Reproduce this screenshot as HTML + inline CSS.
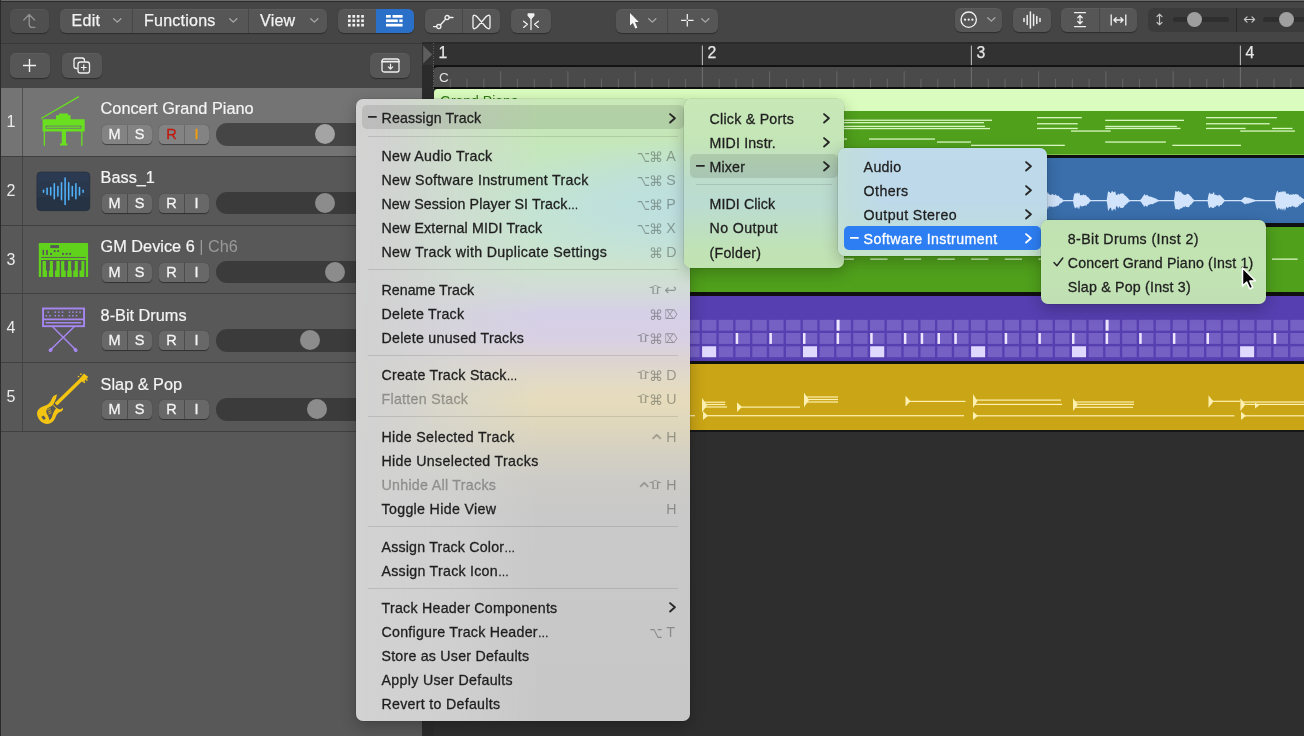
<!DOCTYPE html>
<html lang="en"><head><meta charset="utf-8"><title>Logic Pro - Reassign Track</title>
<style>
*{box-sizing:border-box;margin:0;padding:0}
html,body{width:1306px;height:738px;background:#fff;overflow:hidden}
body{font-family:"Liberation Sans",sans-serif;color:#fff;position:relative}
#app{position:absolute;left:0;top:0;width:1304px;height:736px;background:#2e2e2e;overflow:hidden;will-change:transform}
.abs{position:absolute}
#toolbar{position:absolute;left:0;top:0;width:1304px;height:43px;background:linear-gradient(to bottom,#2c2c2c 0,#2c2c2c .9px,#454545 1px) #454545;border-top:.9px solid #6a6a6a}
#row2{position:absolute;left:0;top:43px;width:422px;height:45px;background:#464646;border-top:1px solid #393939}
.btn{position:absolute;top:8px;height:24px;background:#565656;border-radius:6px;box-shadow:0 1px 1px rgba(0,0,0,.35), inset 0 .5px 0 rgba(255,255,255,.08)}
.btn.dim{background:#4f4f4f}
.btn .div{position:absolute;top:0;width:1px;height:24px;background:#474747}
.btn .lbl{position:absolute;top:.8px;letter-spacing:.25px;line-height:22px;font-size:16px;color:#f2f2f2;white-space:nowrap;-webkit-text-stroke:.25px #f2f2f2}
.btn svg{position:absolute;overflow:visible}
.tr{position:absolute;left:0;width:422px;height:68.75px;background:#585858;border-bottom:1px solid #404040}
.tr.sel{background:#747474}
.tr .num{position:absolute;left:0;top:0;width:23px;height:100%;border-right:1px solid #444;text-align:center;font-size:16px;color:#ececec;line-height:68.8px;padding-left:0px}
.tr.sel .num{border-right-color:#505050;}
.tr .name{position:absolute;left:100.6px;top:10.5px;font-size:16.3px;line-height:20px;color:#f4f4f4;white-space:nowrap;-webkit-text-stroke:.2px #f4f4f4}
.tr .name span{color:#9a9a9a;-webkit-text-stroke:0}
.ms{position:absolute;top:37px;height:19px;border-radius:4.5px;background:#686868;box-shadow:0 .5px .8px rgba(0,0,0,.45)}
.tr.sel .ms{background:#838383}
.ms b{position:absolute;top:0;width:25px;text-align:center;font-weight:normal;font-size:14.5px;line-height:19.4px;color:#f4f4f4;-webkit-text-stroke:.3px}
.ms i{position:absolute;left:24.5px;top:0;width:1px;height:100%;background:#4c4c4c}
.tr.sel .ms i{background:#6a6a6a}
.vol{position:absolute;left:216px;top:35px;width:200px;height:22.5px;border-radius:11.25px;background:#3b3b3b}
.tr.sel .vol{background:#454545}
.knob{position:absolute;top:1.2px;width:20px;height:20px;border-radius:10px;background:#8c8c8c}
.tr.sel .knob{background:#a4a4a4}
</style></head>
<body>
<div id="app">
<div id="toolbar"><div class="btn dim" style="left:10px;width:38.8px"><svg style="left:12px;top:4px" width="16" height="16" viewBox="0 0 16 16"><path d="M1.8 7 L7.2 1.6 L12.6 7 M7.2 2 V11.2 Q7.2 14.4 10.6 14.4 H12.8" fill="none" stroke="#919191" stroke-width="1.4" stroke-linecap="round" stroke-linejoin="round"/></svg></div><div class="btn" style="left:60px;width:266.5px"><span class="lbl" style="left:11.6px">Edit</span><svg style="left:52.7px;top:9.3px" width="8.6" height="5.2" viewBox="0 0 10 6"><path d="M0.8 0.8 L5 4.8 L9.2 0.8" fill="none" stroke="#a8a8a8" stroke-width="1.5" stroke-linecap="round" stroke-linejoin="round"/></svg><div class="div" style="left:72px"></div><span class="lbl" style="left:84px">Functions</span><svg style="left:168.7px;top:9.3px" width="8.6" height="5.2" viewBox="0 0 10 6"><path d="M0.8 0.8 L5 4.8 L9.2 0.8" fill="none" stroke="#a8a8a8" stroke-width="1.5" stroke-linecap="round" stroke-linejoin="round"/></svg><div class="div" style="left:187.5px"></div><span class="lbl" style="left:200px">View</span><svg style="left:249.7px;top:9.3px" width="8.6" height="5.2" viewBox="0 0 10 6"><path d="M0.8 0.8 L5 4.8 L9.2 0.8" fill="none" stroke="#a8a8a8" stroke-width="1.5" stroke-linecap="round" stroke-linejoin="round"/></svg></div><div class="btn" style="left:338px;width:76px;overflow:hidden"><svg style="left:10px;top:6.4px" width="16" height="12" viewBox="0 0 16 12" fill="#f0f0f0"><rect x="0.0" y="0.0" width="2.7" height="2.7"/><rect x="0.0" y="4.4" width="2.7" height="2.7"/><rect x="0.0" y="8.8" width="2.7" height="2.7"/><rect x="4.4" y="0.0" width="2.7" height="2.7"/><rect x="4.4" y="4.4" width="2.7" height="2.7"/><rect x="4.4" y="8.8" width="2.7" height="2.7"/><rect x="8.8" y="0.0" width="2.7" height="2.7"/><rect x="8.8" y="4.4" width="2.7" height="2.7"/><rect x="8.8" y="8.8" width="2.7" height="2.7"/><rect x="13.2" y="0.0" width="2.7" height="2.7"/><rect x="13.2" y="4.4" width="2.7" height="2.7"/><rect x="13.2" y="8.8" width="2.7" height="2.7"/></svg><div class="abs" style="left:38px;top:0;width:38px;height:24px;background:#2a6fc8"></div><svg style="left:48px;top:6.4px" width="17" height="12" viewBox="0 0 17 12" fill="#fff"><rect x="0" y="0" width="4.8" height="2.7"/><rect x="6.5" y="0" width="10.1" height="2.7"/><rect x="0" y="4.4" width="11.8" height="2.7"/><rect x="13.3" y="4.4" width="3.3" height="2.7"/><rect x="0" y="8.8" width="16.6" height="2.7"/></svg></div><div class="btn" style="left:425px;width:75px"><svg style="left:7.6px;top:3.5px" width="22" height="16" viewBox="0 0 22 16" fill="none" stroke="#f0f0f0" stroke-width="1.3" stroke-linecap="round"><path d="M0.5 13.6 H3.6"/><circle cx="5.8" cy="13.6" r="2.1"/><path d="M7.3 12 L12.6 6.2"/><circle cx="14.1" cy="4.6" r="2.1"/><path d="M16.3 4.5 H20"/></svg><div class="div" style="left:37px"></div><svg style="left:46.5px;top:6px" width="19" height="14" viewBox="0 0 19 14" fill="none" stroke="#f0f0f0" stroke-width="1.3" stroke-linejoin="round"><path d="M1 2.2 V11.8 M18 2.2 V11.8 M1 2.2 C1 -1 4 0 6.5 3.5 L12.5 10.5 C15 14 18 15 18 11.8 M1 11.8 C1 15 4 14 6.5 10.5 L12.5 3.5 C15 0 18 -1 18 2.2"/></svg></div><div class="btn" style="left:511px;width:39.5px"><svg style="left:10px;top:3.5px" width="20" height="17" viewBox="0 0 20 17" fill="none" stroke="#f0f0f0" stroke-width="1.3" stroke-linecap="round" stroke-linejoin="round"><path d="M7.2 1 H12.8 V2.6 L10.3 5.4 H9.7 L7.2 2.6 Z" fill="#f0f0f0"/><path d="M10 5 V16.5"/><path d="M2.6 8.2 L6.4 11.3 L2.6 14.4"/><path d="M17.4 8.2 L13.6 11.3 L17.4 14.4"/></svg></div><div class="btn" style="left:616px;width:102px"><svg style="left:13px;top:2.5px" width="11" height="18" viewBox="0 0 11 18"><path d="M1 1 V13.6 L3.9 10.9 L6.3 16.6 L8.4 15.7 L6 10.1 L9.8 9.9 Z" fill="#f4f4f4"/></svg><svg style="left:32.2px;top:9.3px" width="8.6" height="5.2" viewBox="0 0 10 6"><path d="M0.8 0.8 L5 4.8 L9.2 0.8" fill="none" stroke="#a8a8a8" stroke-width="1.5" stroke-linecap="round" stroke-linejoin="round"/></svg><div class="div" style="left:50.6px"></div><svg style="left:64.5px;top:5px" width="12.6" height="12.6" viewBox="0 0 15 15" fill="none" stroke="#f0f0f0" stroke-width="1.5"><path d="M7.5 0 V6.6 M7.5 8.4 V15 M0 7.5 H6.6 M8.4 7.5 H15"/></svg><svg style="left:85.2px;top:9.3px" width="8.6" height="5.2" viewBox="0 0 10 6"><path d="M0.8 0.8 L5 4.8 L9.2 0.8" fill="none" stroke="#a8a8a8" stroke-width="1.5" stroke-linecap="round" stroke-linejoin="round"/></svg></div><div class="btn" style="top:6.5px;left:955px;width:47px"><svg style="left:5.3px;top:3.4px" width="17.4" height="17.4" viewBox="0 0 17 17"><circle cx="8.5" cy="8.5" r="7.5" fill="none" stroke="#f0f0f0" stroke-width="1.3"/><circle cx="4.9" cy="8.5" r="1.1" fill="#f0f0f0"/><circle cx="8.5" cy="8.5" r="1.1" fill="#f0f0f0"/><circle cx="12.1" cy="8.5" r="1.1" fill="#f0f0f0"/></svg><svg style="left:32.2px;top:9.3px" width="8.6" height="5.2" viewBox="0 0 10 6"><path d="M0.8 0.8 L5 4.8 L9.2 0.8" fill="none" stroke="#a8a8a8" stroke-width="1.5" stroke-linecap="round" stroke-linejoin="round"/></svg></div><div class="btn" style="top:6.5px;left:1013px;width:37.5px"><svg style="left:10px;top:3px" width="18" height="18" viewBox="0 0 18 18" stroke="#f0f0f0" stroke-width="1.5" stroke-linecap="round"><path d="M1 7.5 V10.5 M4.2 4.5 V13.5 M7.4 1 V17 M10.6 3.5 V14.5 M13.8 5.5 V12.5 M17 7.5 V10.5"/></svg></div><div class="btn" style="top:6.5px;left:1061px;width:76px"><svg style="left:12px;top:3.5px" width="14" height="17" viewBox="0 0 14 17" fill="none" stroke="#f0f0f0" stroke-width="1.3" stroke-linecap="round" stroke-linejoin="round"><path d="M1.5 1.6 H12.5 M1.5 15.6 H12.5 M7 4.6 V12.6 M4.8 6.7 L7 4.5 L9.2 6.7 M4.8 10.5 L7 12.7 L9.2 10.5"/></svg><div class="div" style="left:38px"></div><svg style="left:48.5px;top:5px" width="17" height="14" viewBox="0 0 17 14" fill="none" stroke="#f0f0f0" stroke-width="1.3" stroke-linecap="round" stroke-linejoin="round"><path d="M1.2 2 V12 M15.8 2 V12 M4 7 H13 M6.2 4.8 L3.9 7 L6.2 9.2 M10.8 4.8 L13.1 7 L10.8 9.2"/></svg></div><div class="btn" style="top:6.5px;left:1147.5px;width:170px;background:#3b3b3b;box-shadow:none"><svg style="left:8.5px;top:5.5px" width="7" height="13" viewBox="0 0 9 17" fill="none" stroke="#c4c4c4" stroke-width="1.6" stroke-linecap="round" stroke-linejoin="round"><path d="M4.5 1.5 V15.5 M1.2 4.8 L4.5 1.5 L7.8 4.8 M1.2 12.2 L4.5 15.5 L7.8 12.2"/></svg><div class="abs" style="left:25.5px;top:9.5px;width:56px;height:5px;border-radius:2.5px;background:#2e2e2e"></div><div class="abs" style="left:39.9px;top:4.5px;width:15px;height:15px;border-radius:7.5px;background:#9f9f9f"></div><div class="div" style="left:88.5px;background:#2a2a2a"></div><svg style="left:95.8px;top:8.5px" width="13" height="7" viewBox="0 0 16 9" fill="none" stroke="#c4c4c4" stroke-width="1.6" stroke-linecap="round" stroke-linejoin="round"><path d="M1.5 4.5 H14.5 M4.8 1.2 L1.5 4.5 L4.8 7.8 M11.2 1.2 L14.5 4.5 L11.2 7.8"/></svg><div class="abs" style="left:115px;top:9.5px;width:56px;height:5px;border-radius:2.5px;background:#2e2e2e"></div><div class="abs" style="left:131.6px;top:4.5px;width:15px;height:15px;border-radius:7.5px;background:#9f9f9f"></div></div></div>
<div id="row2"><div class="btn" style="left:10px;top:9px;width:39.5px;height:24.5px"><svg style="left:13px;top:6px" width="13" height="13" viewBox="0 0 13 13" stroke="#f0f0f0" stroke-width="1.4"><path d="M6.5 0 V13 M0 6.5 H13"/></svg></div><div class="btn" style="left:62px;top:9px;width:39.5px;height:24.5px"><svg style="left:11px;top:4px" width="18" height="17" viewBox="0 0 18 17" fill="none" stroke="#f0f0f0" stroke-width="1.3" stroke-linejoin="round"><path d="M4.5 11.5 H3.3 Q1 11.5 1 9.2 V3.3 Q1 1 3.3 1 H9.2 Q11.5 1 11.5 3.3 V4.5"/><rect x="5" y="5" width="11.5" height="11" rx="2.3"/><path d="M10.75 7.6 V13.4 M7.85 10.5 H13.65" stroke-width="1.2"/></svg></div><div class="btn" style="left:370px;top:9px;width:40px;height:24.5px"><svg style="left:11px;top:5px" width="19" height="15" viewBox="0 0 19 15" fill="none" stroke="#f0f0f0" stroke-width="1.3" stroke-linecap="round" stroke-linejoin="round"><rect x="1" y="1" width="17" height="13" rx="2"/><path d="M1 3.6 H18" stroke-width="1.6"/><path d="M9.5 6 V11 M7.3 8.9 L9.5 11.1 L11.7 8.9" stroke-width="1.2"/></svg></div></div>
<div class="tr sel" style="top:88.0px"><div class="num">1</div><div class="name" style="top:9.8px">Concert Grand Piano</div><div class="ms" style="left:102px;width:50px"><b style="left:0">M</b><i></i><b style="left:25px">S</b></div><div class="ms" style="left:159px;width:50px"><b style="left:0;color:#c4170e">R</b><i></i><b style="left:25px;color:#f59e0b">I</b></div><div class="vol"><div class="knob" style="left:99px"></div></div></div>
<div class="tr" style="top:156.75px"><div class="num">2</div><div class="name">Bass_1</div><div class="ms" style="left:102px;width:50px"><b style="left:0">M</b><i></i><b style="left:25px">S</b></div><div class="ms" style="left:159px;width:50px"><b style="left:0">R</b><i></i><b style="left:25px">I</b></div><div class="vol"><div class="knob" style="left:99px"></div></div></div>
<div class="tr" style="top:225.5px"><div class="num">3</div><div class="name">GM Device 6<span> | Ch6</span></div><div class="ms" style="left:102px;width:50px"><b style="left:0">M</b><i></i><b style="left:25px">S</b></div><div class="ms" style="left:159px;width:50px"><b style="left:0">R</b><i></i><b style="left:25px">I</b></div><div class="vol"><div class="knob" style="left:109.39999999999998px"></div></div></div>
<div class="tr" style="top:294.25px"><div class="num">4</div><div class="name">8-Bit Drums</div><div class="ms" style="left:102px;width:50px"><b style="left:0">M</b><i></i><b style="left:25px">S</b></div><div class="ms" style="left:159px;width:50px"><b style="left:0">R</b><i></i><b style="left:25px">I</b></div><div class="vol"><div class="knob" style="left:84px"></div></div></div>
<div class="tr" style="top:363.0px"><div class="num">5</div><div class="name">Slap &amp; Pop</div><div class="ms" style="left:102px;width:50px"><b style="left:0">M</b><i></i><b style="left:25px">S</b></div><div class="ms" style="left:159px;width:50px"><b style="left:0">R</b><i></i><b style="left:25px">I</b></div><div class="vol"><div class="knob" style="left:91px"></div></div></div>
<svg class="abs" style="left:36px;top:93px" width="56" height="56" viewBox="36 93 56 56"><path d="M41.6 118.2 L78.4 96.9" stroke="#68e01f" stroke-width="1.3" stroke-linecap="round" fill="none"/><path d="M42.6 119.3 H56 V115.2 H59 V113.6 H68 V115.2 H70.6 V119.3 H84.7 V131.6 H82.5 V145.8 H81.2 V131.6 H66 V143.4 H67.4 V145.6 H60 V143.4 H61.8 V131.6 H45 V145.8 H43.7 V131.6 H42.6 Z" fill="#68e01f"/><rect x="45.6" y="125.6" width="35.8" height="3.1" fill="#747474"/><rect x="46.6" y="126.5" width="33.8" height="1.3" fill="#68e01f"/></svg>
<svg class="abs" style="left:36px;top:171px" width="56" height="42" viewBox="36 171 56 42"><rect x="36.9" y="172" width="52.9" height="38.7" rx="4" fill="#263345" stroke="#1f2a38" stroke-width=".6"/><rect x="37.2" y="172.3" width="52.3" height="19" rx="3.8" fill="#2e3e54" opacity=".75"/><rect x="37.2" y="181" width="52.3" height="16" fill="#2a384c" opacity=".8"/><g stroke="#50b2fb" stroke-width="1.55" stroke-linecap="round"><path d="M43.50 190.30 V192.30"/><path d="M47.10 188.30 V194.30"/><path d="M50.70 187.55 V195.05"/><path d="M54.30 183.80 V198.80"/><path d="M57.90 186.55 V196.05"/><path d="M61.50 182.80 V199.80"/><path d="M65.10 178.05 V204.55"/><path d="M68.70 182.80 V199.80"/><path d="M72.30 186.55 V196.05"/><path d="M75.90 183.80 V198.80"/><path d="M79.50 187.55 V195.05"/><path d="M83.10 190.30 V192.30"/></g></svg>
<svg class="abs" style="left:30px;top:236px" width="70" height="48" viewBox="0 0 1076 738"><rect x="135" y="108" width="758" height="524" rx="14" fill="#60d21c"/><rect x="312" y="140" width="133" height="46" fill="#585858"/><rect x="192" y="214" width="24" height="78" fill="#585858"/><rect x="248" y="214" width="26" height="78" fill="#585858"/><rect x="309" y="261" width="31" height="30" fill="#585858"/><rect x="365" y="217" width="30" height="28" fill="#585858"/><rect x="418" y="217" width="30" height="28" fill="#585858"/><rect x="493" y="260" width="30" height="30" fill="#585858"/><rect x="548" y="260" width="30" height="30" fill="#585858"/><rect x="601" y="260" width="31" height="30" fill="#585858"/><rect x="170" y="322" width="690" height="14" fill="#585858"/><rect x="170" y="370" width="690" height="262" fill="#585858"/><path d="M193 385 H245 V530 H262 V632 H193 V530 H193 Z" fill="#60d21c"/><path d="M305 385 H352 V530 H355 V632 H290 V530 H305 Z" fill="#60d21c"/><path d="M405 385 H457 V530 H457 V632 H385 V530 H405 Z" fill="#60d21c"/><path d="M478 385 H527 V530 H550 V632 H478 V530 H478 Z" fill="#60d21c"/><path d="M585 385 H632 V530 H642 V632 H572 V530 H585 Z" fill="#60d21c"/><path d="M688 385 H735 V530 H737 V632 H665 V530 H688 Z" fill="#60d21c"/><path d="M790 385 H835 V530 H835 V632 H760 V530 H790 Z" fill="#60d21c"/></svg>
<svg class="abs" style="left:30px;top:300px" width="70" height="56" viewBox="0 0 922 738"><rect x="172" y="112" width="540" height="233" fill="none" stroke="#a686f0" stroke-width="25"/><g fill="#a686f0"><rect x="230" y="150" width="20" height="20"/><rect x="323" y="150" width="20" height="20"/><rect x="370" y="150" width="20" height="20"/><rect x="418" y="150" width="20" height="20"/><rect x="510" y="150" width="20" height="20"/><rect x="555" y="150" width="20" height="20"/><rect x="603" y="150" width="20" height="20"/><rect x="650" y="150" width="20" height="20"/><rect x="205" y="197" width="20" height="20"/><rect x="252" y="197" width="20" height="20"/><rect x="323" y="197" width="20" height="20"/><rect x="370" y="197" width="20" height="20"/><rect x="418" y="197" width="20" height="20"/><rect x="510" y="197" width="20" height="20"/><rect x="555" y="197" width="20" height="20"/><rect x="603" y="197" width="20" height="20"/></g><path d="M172 255 H712" stroke="#a686f0" stroke-width="24"/><path d="M212 300 H668" stroke="#a686f0" stroke-width="18" stroke-linecap="round"/><path d="M298 352 L598 652 M582 352 L274 652" stroke="#a686f0" stroke-width="20" stroke-linecap="round"/><ellipse cx="272" cy="658" rx="30" ry="24" transform="rotate(-45 272 658)" fill="#a686f0"/><ellipse cx="600" cy="658" rx="30" ry="24" transform="rotate(45 600 658)" fill="#a686f0"/></svg>
<svg class="abs" style="left:24px;top:364px" width="80" height="70" viewBox="0 0 843 738"><path d="M350 322 C338 345 340 375 318 408 L312 428 C325 450 345 470 372 478 C392 480 400 470 408 458 C415 475 410 492 392 500 C362 510 348 525 338 548 C325 585 305 615 272 628 C235 640 195 625 168 595 C140 560 128 520 145 490 C160 462 195 450 232 436 C262 422 280 398 292 368 C300 342 325 325 350 322 Z" fill="#f3c411"/><path d="M326 412 L600 146 L622 168 L350 436 Z" fill="#f3c411"/><path d="M298 446 L322 412 L352 382" fill="none" stroke="#585858" stroke-width="7" stroke-linecap="round"/><path d="M326 412 L600 146 L622 168 L350 436 Z" fill="#f3c411"/><path d="M585 158 L632 100 L678 138 L650 165 L622 196 Z" fill="#f3c411"/><circle cx="600" cy="106" r="9" fill="#f3c411"/><circle cx="575" cy="132" r="9" fill="#f3c411"/><circle cx="662" cy="168" r="9" fill="#f3c411"/><circle cx="636" cy="192" r="9" fill="#f3c411"/><path d="M246 470 C268 455 290 448 305 436 L338 470 C318 490 305 520 298 548 C292 570 282 585 268 590 C262 560 250 540 238 520 C232 500 236 482 246 470 Z" fill="#585858"/><path d="M182 560 L205 542 L230 572 L208 590 Z" fill="#585858"/><path d="M250 482 L275 470 M258 505 L283 493 M263 525 L285 515" stroke="#f3c411" stroke-width="9" stroke-linecap="round"/></svg>
<div class="abs" style="left:0;top:431.75px;width:422px;height:400px;background:#585858"></div>
<div class="abs" style="left:0;top:0;width:1px;height:736px;background:#2b2b2b"></div>
<div class="abs" style="left:422px;top:43px;width:882px;height:693px;background:#2e2e2e"></div>
<div class="abs" style="left:422px;top:43px;width:12px;height:693px;background:#2b2b2b"></div>
<div class="abs" style="left:422px;top:42px;width:882px;height:1.5px;background:#2a2a2a"></div>
<div class="abs" style="left:422px;top:43.5px;width:882px;height:21.5px;background:#323232"></div>
<div class="abs" style="left:434px;top:65px;width:870px;height:3px;background:#131313"></div>
<div class="abs" style="left:434px;top:67px;width:870px;height:20.3px;background:#4a4a4a;border-top-left-radius:4px"></div>
<div class="abs" style="left:434px;top:87.2px;width:870px;height:2px;background:#0e0e0e"></div>
<svg class="abs" style="left:422px;top:43px" width="12" height="24" viewBox="0 0 12 24"><path d="M1.2 2.5 L10.2 11.5 L1.2 20.5 Z" fill="#5e5e5e"/></svg>
<div class="abs" style="left:433.3px;top:43px;width:1px;height:46px;background:repeating-linear-gradient(to bottom,#6a6a6a 0 1px,transparent 1px 2.5px);opacity:.8"></div>
<svg class="abs" style="left:0;top:43px" width="1304" height="46" viewBox="0 0 1304 46"><rect x="701.85" y="2.6" width="1.1" height="19.6" fill="#b8b8b8"/><rect x="701.85" y="24" width="1.1" height="20.2" fill="#6e6e6e"/><rect x="970.85" y="2.6" width="1.1" height="19.6" fill="#b8b8b8"/><rect x="970.85" y="24" width="1.1" height="20.2" fill="#6e6e6e"/><rect x="1239.85" y="2.6" width="1.1" height="19.6" fill="#b8b8b8"/><rect x="1239.85" y="24" width="1.1" height="20.2" fill="#6e6e6e"/><rect x="449.71" y="35.8" width="1" height="8.5" fill="#666"/><rect x="466.52" y="35.8" width="1" height="8.5" fill="#666"/><rect x="483.34" y="35.8" width="1" height="8.5" fill="#666"/><rect x="500.15" y="28.3" width="1" height="16" fill="#686868"/><rect x="516.96" y="35.8" width="1" height="8.5" fill="#666"/><rect x="533.77" y="35.8" width="1" height="8.5" fill="#666"/><rect x="550.59" y="35.8" width="1" height="8.5" fill="#666"/><rect x="567.40" y="28.3" width="1" height="16" fill="#686868"/><rect x="584.21" y="35.8" width="1" height="8.5" fill="#666"/><rect x="601.02" y="35.8" width="1" height="8.5" fill="#666"/><rect x="617.84" y="35.8" width="1" height="8.5" fill="#666"/><rect x="634.65" y="28.3" width="1" height="16" fill="#686868"/><rect x="651.46" y="35.8" width="1" height="8.5" fill="#666"/><rect x="668.27" y="35.8" width="1" height="8.5" fill="#666"/><rect x="685.09" y="35.8" width="1" height="8.5" fill="#666"/><rect x="718.71" y="35.8" width="1" height="8.5" fill="#666"/><rect x="735.52" y="35.8" width="1" height="8.5" fill="#666"/><rect x="752.34" y="35.8" width="1" height="8.5" fill="#666"/><rect x="769.15" y="28.3" width="1" height="16" fill="#686868"/><rect x="785.96" y="35.8" width="1" height="8.5" fill="#666"/><rect x="802.77" y="35.8" width="1" height="8.5" fill="#666"/><rect x="819.59" y="35.8" width="1" height="8.5" fill="#666"/><rect x="836.40" y="28.3" width="1" height="16" fill="#686868"/><rect x="853.21" y="35.8" width="1" height="8.5" fill="#666"/><rect x="870.02" y="35.8" width="1" height="8.5" fill="#666"/><rect x="886.84" y="35.8" width="1" height="8.5" fill="#666"/><rect x="903.65" y="28.3" width="1" height="16" fill="#686868"/><rect x="920.46" y="35.8" width="1" height="8.5" fill="#666"/><rect x="937.27" y="35.8" width="1" height="8.5" fill="#666"/><rect x="954.09" y="35.8" width="1" height="8.5" fill="#666"/><rect x="987.71" y="35.8" width="1" height="8.5" fill="#666"/><rect x="1004.52" y="35.8" width="1" height="8.5" fill="#666"/><rect x="1021.34" y="35.8" width="1" height="8.5" fill="#666"/><rect x="1038.15" y="28.3" width="1" height="16" fill="#686868"/><rect x="1054.96" y="35.8" width="1" height="8.5" fill="#666"/><rect x="1071.78" y="35.8" width="1" height="8.5" fill="#666"/><rect x="1088.59" y="35.8" width="1" height="8.5" fill="#666"/><rect x="1105.40" y="28.3" width="1" height="16" fill="#686868"/><rect x="1122.21" y="35.8" width="1" height="8.5" fill="#666"/><rect x="1139.03" y="35.8" width="1" height="8.5" fill="#666"/><rect x="1155.84" y="35.8" width="1" height="8.5" fill="#666"/><rect x="1172.65" y="28.3" width="1" height="16" fill="#686868"/><rect x="1189.46" y="35.8" width="1" height="8.5" fill="#666"/><rect x="1206.28" y="35.8" width="1" height="8.5" fill="#666"/><rect x="1223.09" y="35.8" width="1" height="8.5" fill="#666"/><rect x="1256.71" y="35.8" width="1" height="8.5" fill="#666"/><rect x="1273.53" y="35.8" width="1" height="8.5" fill="#666"/><rect x="1290.34" y="35.8" width="1" height="8.5" fill="#666"/></svg>
<div class="abs" style="left:438.4px;top:44px;font-size:15.8px;line-height:18px;color:#e6e6e6;-webkit-text-stroke:.25px #e6e6e6">1</div>
<div class="abs" style="left:707.4px;top:44px;font-size:15.8px;line-height:18px;color:#e6e6e6;-webkit-text-stroke:.25px #e6e6e6">2</div>
<div class="abs" style="left:976.4px;top:44px;font-size:15.8px;line-height:18px;color:#e6e6e6;-webkit-text-stroke:.25px #e6e6e6">3</div>
<div class="abs" style="left:1245.4px;top:44px;font-size:15.8px;line-height:18px;color:#e6e6e6;-webkit-text-stroke:.25px #e6e6e6">4</div>
<div class="abs" style="left:439px;top:68.5px;font-size:13.5px;line-height:18px;color:#e4e4e4">C</div>
<div class="abs" style="left:434px;top:89px;width:870px;height:66px;background:#50a01c;border-top-left-radius:4px;overflow:hidden"><div class="abs" style="left:0;top:0;width:100%;height:22px;background:#dafcbe"></div><div class="abs" style="left:6px;top:2.6px;font-size:14px;line-height:18px;color:#2f7d12;white-space:nowrap">Grand Piano</div></div>
<svg class="abs" style="left:0;top:0" width="1304" height="440" viewBox="0 0 1304 440"><rect x="844" y="119.6" width="148" height="1.3" fill="#d8f7c0"/><rect x="844" y="122.0" width="140" height="1.3" fill="#d8f7c0"/><rect x="844" y="125.7" width="141" height="1.3" fill="#d8f7c0"/><rect x="844" y="127.9" width="146" height="1.3" fill="#d8f7c0"/><rect x="844" y="138.4" width="3" height="1.3" fill="#d8f7c0"/><rect x="869" y="138.4" width="66" height="1.3" fill="#d8f7c0"/><rect x="937" y="141.4" width="34" height="1.3" fill="#d8f7c0"/><rect x="971" y="144.7" width="93.79999999999995" height="1.3" fill="#d8f7c0"/><rect x="1037" y="117.0" width="44.799999999999955" height="1.3" fill="#d8f7c0"/><rect x="1037" y="123.1" width="40.700000000000045" height="1.3" fill="#d8f7c0"/><rect x="1037" y="127.8" width="40.700000000000045" height="1.3" fill="#d8f7c0"/><rect x="1071" y="130.4" width="39.700000000000045" height="1.3" fill="#d8f7c0"/><rect x="1105.2" y="119.7" width="78.79999999999995" height="1.3" fill="#d8f7c0"/><rect x="1105.2" y="125.8" width="71.70000000000005" height="1.3" fill="#d8f7c0"/><rect x="1105.2" y="127.8" width="75.29999999999995" height="1.3" fill="#d8f7c0"/><rect x="1105.2" y="141.4" width="60.700000000000045" height="1.3" fill="#d8f7c0"/><rect x="1172.4" y="144.7" width="68.59999999999991" height="1.3" fill="#d8f7c0"/><rect x="1206" y="117.0" width="70.90000000000009" height="1.3" fill="#d8f7c0"/><rect x="1206" y="123.1" width="63.700000000000045" height="1.3" fill="#d8f7c0"/><rect x="1206" y="127.8" width="39.700000000000045" height="1.3" fill="#d8f7c0"/><rect x="1272.2" y="127.8" width="20.299999999999955" height="1.3" fill="#d8f7c0"/><rect x="1240.2" y="130.4" width="54.799999999999955" height="1.3" fill="#d8f7c0"/></svg>
<div class="abs" style="left:434px;top:153.5px;width:870px;height:1.5px;background:#7fc04a"></div>
<div class="abs" style="left:434px;top:155px;width:870px;height:3.1px;background:#101010"></div>
<div class="abs" style="left:434px;top:158.2px;width:870px;height:65.3px;background:#3a6fac"></div>
<svg class="abs" style="left:0;top:0" width="1304" height="440" viewBox="0 0 1304 440"><g fill="#d2e4fb"><rect x="434" y="200" width="870" height="1.25"/><path d="M434.2 200.0 L434.9 196.4 L435.6 193.4 L436.3 192.6 L437.0 192.3 L437.7 192.5 L438.5 193.3 L439.2 191.5 L439.9 193.0 L440.6 191.2 L441.3 192.6 L442.0 193.5 L442.7 194.9 L443.4 195.2 L444.1 193.9 L444.8 194.3 L445.6 194.7 L446.3 195.3 L447.0 195.0 L447.7 194.6 L448.4 194.3 L449.1 194.8 L449.8 194.1 L450.5 194.7 L451.2 194.9 L451.9 196.3 L452.7 197.1 L453.4 197.0 L454.1 197.9 L454.8 198.5 L455.5 199.2 L456.2 200.0 L456.2 201.2 L455.5 202.1 L454.8 202.8 L454.1 203.0 L453.4 203.8 L452.7 204.0 L451.9 205.4 L451.2 206.7 L450.5 206.5 L449.8 206.6 L449.1 206.8 L448.4 206.8 L447.7 206.3 L447.0 206.5 L446.3 205.3 L445.6 206.6 L444.8 207.1 L444.1 206.7 L443.4 205.7 L442.7 205.8 L442.0 208.5 L441.3 209.7 L440.6 210.2 L439.9 208.5 L439.2 208.7 L438.5 207.7 L437.7 207.7 L437.0 207.8 L436.3 207.6 L435.6 207.9 L434.9 205.0 L434.2 201.2 Z"/><path d="M467.8 200.0 L468.5 195.3 L469.3 193.3 L470.0 192.2 L470.7 192.8 L471.4 192.7 L472.1 192.1 L472.9 193.7 L473.6 192.8 L474.3 193.3 L475.0 195.7 L475.7 194.7 L476.5 195.5 L477.2 194.5 L477.9 195.2 L478.6 194.5 L479.3 194.5 L480.1 195.2 L480.8 194.5 L481.5 196.2 L482.2 196.7 L482.9 197.1 L483.7 197.9 L484.4 198.5 L485.1 199.2 L485.8 200.0 L485.8 201.2 L485.1 202.1 L484.4 202.7 L483.7 203.0 L482.9 204.2 L482.2 204.2 L481.5 204.6 L480.8 207.5 L480.1 205.8 L479.3 206.3 L478.6 207.3 L477.9 206.1 L477.2 206.0 L476.5 205.5 L475.7 205.9 L475.0 204.9 L474.3 207.3 L473.6 207.4 L472.9 207.3 L472.1 209.9 L471.4 208.8 L470.7 207.4 L470.0 209.0 L469.3 208.6 L468.5 206.0 L467.8 201.2 Z"/><path d="M501.4 200.0 L502.2 195.7 L502.9 193.4 L503.6 191.6 L504.3 191.6 L505.0 192.6 L505.7 192.0 L506.4 193.4 L507.1 193.2 L507.8 193.4 L508.5 193.2 L509.3 192.7 L510.0 193.8 L510.7 195.1 L511.4 194.8 L512.1 195.2 L512.8 193.6 L513.5 194.5 L514.2 195.2 L514.9 194.9 L515.6 195.1 L516.4 193.7 L517.1 195.1 L517.8 195.7 L518.5 194.7 L519.2 195.8 L519.9 196.8 L520.6 197.0 L521.3 197.7 L522.0 198.7 L522.7 199.1 L523.5 200.0 L523.5 201.2 L522.7 202.2 L522.0 202.6 L521.3 203.4 L520.6 204.2 L519.9 204.1 L519.2 205.1 L518.5 207.0 L517.8 205.6 L517.1 206.1 L516.4 207.6 L515.6 205.4 L514.9 206.8 L514.2 205.8 L513.5 206.0 L512.8 207.6 L512.1 206.6 L511.4 206.2 L510.7 205.7 L510.0 207.6 L509.3 207.5 L508.5 207.2 L507.8 206.8 L507.1 207.7 L506.4 207.2 L505.7 208.2 L505.0 207.7 L504.3 209.4 L503.6 210.5 L502.9 208.6 L502.2 205.7 L501.4 201.2 Z"/><path d="M535.1 200.0 L535.8 195.1 L536.5 193.1 L537.2 194.2 L538.0 193.7 L538.7 192.7 L539.4 193.3 L540.1 192.1 L540.8 193.5 L541.6 193.8 L542.3 195.6 L543.0 194.5 L543.7 195.1 L544.4 194.6 L545.2 194.8 L545.9 194.6 L546.6 195.1 L547.3 194.6 L548.0 194.6 L548.8 195.9 L549.5 195.9 L550.2 197.4 L550.9 198.0 L551.6 198.3 L552.4 199.1 L553.1 200.0 L553.1 201.2 L552.4 202.2 L551.6 202.7 L550.9 203.4 L550.2 203.5 L549.5 205.6 L548.8 205.2 L548.0 207.4 L547.3 206.3 L546.6 205.6 L545.9 207.0 L545.2 207.0 L544.4 205.9 L543.7 206.3 L543.0 207.3 L542.3 205.8 L541.6 206.8 L540.8 207.2 L540.1 210.2 L539.4 208.8 L538.7 209.5 L538.0 207.1 L537.2 206.1 L536.5 207.8 L535.8 205.7 L535.1 201.2 Z"/><path d="M568.7 200.0 L569.4 195.8 L570.1 193.5 L570.8 191.9 L571.5 191.2 L572.2 191.4 L573.0 193.0 L573.7 192.8 L574.4 192.1 L575.1 192.5 L575.8 191.3 L576.5 192.4 L577.2 193.7 L577.9 193.7 L578.6 194.4 L579.3 195.4 L580.1 195.1 L580.8 193.9 L581.5 194.5 L582.2 194.4 L582.9 194.4 L583.6 194.0 L584.3 194.4 L585.0 195.2 L585.7 195.4 L586.4 195.7 L587.2 196.7 L587.9 197.3 L588.6 197.8 L589.3 198.5 L590.0 199.1 L590.7 200.0 L590.7 201.2 L590.0 202.1 L589.3 202.6 L588.6 203.4 L587.9 203.9 L587.2 204.6 L586.4 206.0 L585.7 205.8 L585.0 206.3 L584.3 206.4 L583.6 206.5 L582.9 206.8 L582.2 206.5 L581.5 207.0 L580.8 206.7 L580.1 205.4 L579.3 205.8 L578.6 206.8 L577.9 207.5 L577.2 207.3 L576.5 209.0 L575.8 209.5 L575.1 207.9 L574.4 208.5 L573.7 207.8 L573.0 207.6 L572.2 210.7 L571.5 209.8 L570.8 209.3 L570.1 208.6 L569.4 204.9 L568.7 201.2 Z"/><path d="M602.3 200.0 L603.0 195.8 L603.8 192.2 L604.5 194.0 L605.2 193.3 L605.9 193.8 L606.6 192.8 L607.4 192.3 L608.1 192.7 L608.8 194.0 L609.5 194.3 L610.2 194.4 L611.0 195.1 L611.7 194.6 L612.4 195.2 L613.1 195.4 L613.8 195.4 L614.6 195.9 L615.3 195.2 L616.0 196.0 L616.7 196.4 L617.4 196.6 L618.2 197.4 L618.9 198.6 L619.6 199.1 L620.3 200.0 L620.3 201.2 L619.6 202.0 L618.9 202.4 L618.2 203.5 L617.4 204.9 L616.7 204.3 L616.0 205.4 L615.3 205.3 L614.6 205.4 L613.8 206.1 L613.1 205.4 L612.4 206.0 L611.7 206.1 L611.0 206.8 L610.2 206.7 L609.5 206.4 L608.8 207.9 L608.1 208.9 L607.4 208.1 L606.6 209.0 L605.9 206.6 L605.2 207.0 L604.5 206.5 L603.8 209.8 L603.0 205.5 L602.3 201.2 Z"/><path d="M635.9 200.0 L636.7 195.3 L637.4 192.9 L638.1 191.3 L638.8 191.8 L639.5 193.4 L640.2 192.5 L640.9 191.2 L641.6 191.5 L642.3 191.4 L643.0 191.4 L643.8 192.7 L644.5 193.7 L645.2 195.1 L645.9 195.0 L646.6 195.1 L647.3 195.0 L648.0 194.8 L648.7 194.9 L649.4 195.1 L650.1 195.4 L650.9 195.4 L651.6 194.4 L652.3 194.9 L653.0 196.0 L653.7 196.1 L654.4 196.3 L655.1 197.3 L655.8 197.6 L656.5 198.4 L657.2 199.2 L657.9 200.0 L657.9 201.2 L657.2 202.0 L656.5 202.9 L655.8 203.5 L655.1 204.1 L654.4 204.8 L653.7 205.1 L653.0 205.5 L652.3 207.0 L651.6 206.3 L650.9 206.2 L650.1 205.5 L649.4 205.9 L648.7 206.3 L648.0 206.8 L647.3 205.9 L646.6 205.4 L645.9 205.7 L645.2 206.1 L644.5 207.1 L643.8 208.6 L643.0 209.7 L642.3 208.7 L641.6 208.6 L640.9 210.4 L640.2 207.7 L639.5 208.1 L638.8 208.4 L638.1 210.1 L637.4 207.5 L636.7 206.3 L635.9 201.2 Z"/><path d="M669.6 200.0 L670.3 196.0 L671.0 192.6 L671.7 193.9 L672.5 192.4 L673.2 192.8 L673.9 193.7 L674.6 193.3 L675.3 193.3 L676.1 192.1 L676.8 195.0 L677.5 194.3 L678.2 195.3 L678.9 195.3 L679.7 195.1 L680.4 195.1 L681.1 195.5 L681.8 195.3 L682.5 195.9 L683.3 196.1 L684.0 196.4 L684.7 196.9 L685.4 197.5 L686.1 198.5 L686.9 199.3 L687.6 200.0 L687.6 201.2 L686.9 202.0 L686.1 202.9 L685.4 203.7 L684.7 204.5 L684.0 205.1 L683.3 205.2 L682.5 205.1 L681.8 205.3 L681.1 205.2 L680.4 205.4 L679.7 205.7 L678.9 205.9 L678.2 205.2 L677.5 206.5 L676.8 205.8 L676.1 210.2 L675.3 207.4 L674.6 207.2 L673.9 207.1 L673.2 207.9 L672.5 209.6 L671.7 206.5 L671.0 208.0 L670.3 204.7 L669.6 201.2 Z"/><path d="M703.2 200.0 L703.9 195.4 L704.6 192.0 L705.3 191.5 L706.0 192.3 L706.7 191.5 L707.5 191.5 L708.2 191.3 L708.9 191.8 L709.6 193.5 L710.3 192.7 L711.0 191.5 L711.7 194.2 L712.4 194.1 L713.1 195.4 L713.8 194.0 L714.6 194.4 L715.3 195.3 L716.0 194.9 L716.7 194.9 L717.4 195.0 L718.1 193.6 L718.8 194.7 L719.5 194.6 L720.2 195.3 L720.9 196.6 L721.7 196.9 L722.4 197.5 L723.1 198.2 L723.8 198.7 L724.5 199.2 L725.2 200.0 L725.2 201.2 L724.5 202.0 L723.8 202.6 L723.1 202.7 L722.4 203.8 L721.7 204.5 L720.9 204.2 L720.2 206.1 L719.5 207.1 L718.8 206.5 L718.1 207.6 L717.4 206.6 L716.7 206.7 L716.0 205.6 L715.3 206.3 L714.6 207.1 L713.8 207.2 L713.1 206.2 L712.4 207.0 L711.7 207.2 L711.0 209.9 L710.3 207.7 L709.6 207.0 L708.9 208.7 L708.2 210.4 L707.5 209.9 L706.7 210.5 L706.0 209.0 L705.3 208.8 L704.6 209.8 L703.9 206.3 L703.2 201.2 Z"/><path d="M736.8 200.0 L737.5 195.5 L738.3 194.0 L739.0 193.8 L739.7 192.2 L740.4 193.3 L741.1 192.1 L741.9 193.7 L742.6 192.2 L743.3 193.0 L744.0 195.1 L744.7 195.7 L745.5 195.1 L746.2 194.8 L746.9 194.5 L747.6 195.9 L748.3 195.1 L749.1 195.4 L749.8 195.3 L750.5 195.3 L751.2 196.1 L751.9 197.4 L752.7 197.6 L753.4 198.6 L754.1 199.2 L754.8 200.0 L754.8 201.2 L754.1 202.1 L753.4 202.6 L752.7 203.9 L751.9 204.1 L751.2 205.5 L750.5 205.2 L749.8 205.6 L749.1 205.3 L748.3 206.0 L747.6 204.7 L746.9 206.7 L746.2 206.0 L745.5 206.7 L744.7 205.9 L744.0 206.8 L743.3 207.5 L742.6 208.3 L741.9 207.0 L741.1 209.0 L740.4 208.6 L739.7 207.9 L739.0 208.2 L738.3 207.9 L737.5 205.6 L736.8 201.2 Z"/><path d="M770.4 200.0 L771.2 196.0 L771.9 193.4 L772.6 191.5 L773.3 191.2 L774.0 192.9 L774.7 193.1 L775.4 191.2 L776.1 191.5 L776.8 191.3 L777.5 192.2 L778.3 193.4 L779.0 194.6 L779.7 194.2 L780.4 195.3 L781.1 195.2 L781.8 194.8 L782.5 194.0 L783.2 194.9 L783.9 194.8 L784.6 194.7 L785.4 195.1 L786.1 193.7 L786.8 195.3 L787.5 194.7 L788.2 196.5 L788.9 197.1 L789.6 197.6 L790.3 198.1 L791.0 198.4 L791.7 199.3 L792.4 200.0 L792.4 201.2 L791.7 201.9 L791.0 202.9 L790.3 203.2 L789.6 203.4 L788.9 204.0 L788.2 204.4 L787.5 206.4 L786.8 206.4 L786.1 207.5 L785.4 205.7 L784.6 206.0 L783.9 206.5 L783.2 206.5 L782.5 208.0 L781.8 206.1 L781.1 206.0 L780.4 206.5 L779.7 206.6 L779.0 207.0 L778.3 208.2 L777.5 209.5 L776.8 211.1 L776.1 210.0 L775.4 211.1 L774.7 207.8 L774.0 208.3 L773.3 209.3 L772.6 209.2 L771.9 207.0 L771.2 204.9 L770.4 201.2 Z"/><path d="M804.1 200.0 L804.8 195.7 L805.5 193.7 L806.2 194.0 L807.0 192.9 L807.7 193.8 L808.4 193.7 L809.1 193.3 L809.8 192.4 L810.6 194.2 L811.3 194.8 L812.0 195.1 L812.7 195.9 L813.4 194.4 L814.2 194.5 L814.9 195.5 L815.6 195.7 L816.3 194.8 L817.0 194.7 L817.8 195.4 L818.5 196.3 L819.2 196.8 L819.9 197.4 L820.6 198.5 L821.4 199.3 L822.1 200.0 L822.1 201.2 L821.4 202.0 L820.6 202.5 L819.9 203.9 L819.2 204.2 L818.5 204.4 L817.8 205.8 L817.0 206.7 L816.3 207.1 L815.6 205.6 L814.9 205.2 L814.2 207.5 L813.4 207.3 L812.7 205.2 L812.0 206.2 L811.3 207.1 L810.6 206.1 L809.8 209.7 L809.1 208.8 L808.4 207.3 L807.7 207.0 L807.0 209.1 L806.2 207.2 L805.5 208.4 L804.8 204.9 L804.1 201.2 Z"/><path d="M837.7 200.0 L838.4 196.5 L839.1 192.1 L839.8 193.0 L840.5 193.5 L841.2 192.4 L842.0 191.9 L842.7 192.4 L843.4 192.9 L844.1 191.8 L844.8 193.5 L845.5 191.9 L846.2 194.9 L846.9 193.7 L847.6 195.3 L848.3 194.6 L849.1 195.0 L849.8 194.0 L850.5 195.0 L851.2 194.8 L851.9 195.0 L852.6 194.0 L853.3 193.7 L854.0 195.4 L854.7 195.6 L855.4 195.5 L856.2 196.8 L856.9 196.8 L857.6 198.2 L858.3 198.6 L859.0 199.2 L859.7 200.0 L859.7 201.2 L859.0 202.1 L858.3 202.8 L857.6 202.7 L856.9 204.0 L856.2 204.1 L855.4 205.2 L854.7 205.8 L854.0 205.4 L853.3 207.5 L852.6 206.8 L851.9 205.8 L851.2 206.9 L850.5 206.9 L849.8 207.2 L849.1 206.6 L848.3 206.9 L847.6 205.6 L846.9 207.0 L846.2 206.5 L845.5 209.1 L844.8 207.7 L844.1 208.9 L843.4 209.2 L842.7 208.2 L842.0 210.2 L841.2 209.8 L840.5 207.3 L839.8 208.4 L839.1 208.8 L838.4 204.8 L837.7 201.2 Z"/><path d="M871.3 200.0 L872.0 195.7 L872.8 192.2 L873.5 194.2 L874.2 193.4 L874.9 193.5 L875.6 194.3 L876.4 193.5 L877.1 194.0 L877.8 193.8 L878.5 194.6 L879.2 195.2 L880.0 195.1 L880.7 194.4 L881.4 195.3 L882.1 195.9 L882.8 194.6 L883.6 195.8 L884.3 195.8 L885.0 196.1 L885.7 195.9 L886.4 197.3 L887.2 197.7 L887.9 198.3 L888.6 199.3 L889.3 200.0 L889.3 201.2 L888.6 201.8 L887.9 202.8 L887.2 203.4 L886.4 204.3 L885.7 205.1 L885.0 205.4 L884.3 205.9 L883.6 204.8 L882.8 207.0 L882.1 205.2 L881.4 206.4 L880.7 206.3 L880.0 205.9 L879.2 205.3 L878.5 207.2 L877.8 207.1 L877.1 208.0 L876.4 208.6 L875.6 206.5 L874.9 207.0 L874.2 207.5 L873.5 207.3 L872.8 209.6 L872.0 205.1 L871.3 201.2 Z"/><path d="M904.9 200.0 L905.7 195.7 L906.4 193.5 L907.1 192.4 L907.8 191.2 L908.5 192.9 L909.2 192.3 L909.9 193.1 L910.6 191.7 L911.3 191.6 L912.0 192.7 L912.8 192.7 L913.5 195.2 L914.2 194.0 L914.9 195.3 L915.6 194.4 L916.3 193.6 L917.0 193.6 L917.7 195.2 L918.4 194.5 L919.1 194.6 L919.9 194.6 L920.6 194.2 L921.3 194.3 L922.0 196.0 L922.7 196.3 L923.4 196.8 L924.1 197.5 L924.8 198.1 L925.5 198.4 L926.2 199.3 L926.9 200.0 L926.9 201.2 L926.2 201.9 L925.5 202.9 L924.8 202.9 L924.1 203.5 L923.4 204.6 L922.7 205.0 L922.0 205.6 L921.3 207.2 L920.6 207.5 L919.9 206.8 L919.1 206.2 L918.4 207.1 L917.7 205.4 L917.0 207.2 L916.3 208.3 L915.6 206.5 L914.9 205.3 L914.2 206.7 L913.5 205.5 L912.8 209.2 L912.0 208.1 L911.3 209.8 L910.6 210.3 L909.9 208.7 L909.2 209.9 L908.5 208.1 L907.8 209.7 L907.1 209.9 L906.4 207.2 L905.7 206.1 L904.9 201.2 Z"/><path d="M938.6 200.0 L939.3 195.9 L940.0 192.8 L940.7 194.1 L941.5 192.5 L942.2 192.2 L942.9 193.6 L943.6 193.9 L944.3 193.0 L945.1 193.5 L945.8 195.2 L946.5 194.6 L947.2 195.7 L947.9 194.9 L948.7 195.3 L949.4 195.6 L950.1 194.9 L950.8 195.6 L951.5 195.4 L952.3 196.2 L953.0 196.7 L953.7 197.0 L954.4 198.0 L955.1 198.4 L955.9 199.3 L956.6 200.0 L956.6 201.2 L955.9 201.8 L955.1 202.8 L954.4 203.1 L953.7 203.8 L953.0 204.7 L952.3 204.8 L951.5 206.1 L950.8 205.0 L950.1 206.5 L949.4 205.3 L948.7 205.4 L947.9 205.9 L947.2 205.6 L946.5 207.3 L945.8 205.7 L945.1 208.5 L944.3 209.1 L943.6 208.2 L942.9 206.8 L942.2 207.9 L941.5 209.5 L940.7 207.1 L940.0 209.4 L939.3 205.7 L938.6 201.2 Z"/><path d="M972.2 200.0 L972.9 196.2 L973.6 191.2 L974.3 192.1 L975.0 192.5 L975.7 191.1 L976.5 193.1 L977.2 193.1 L977.9 191.3 L978.6 191.5 L979.3 191.3 L980.0 193.2 L980.7 194.4 L981.4 193.7 L982.1 194.3 L982.8 194.5 L983.6 194.9 L984.3 193.7 L985.0 194.5 L985.7 193.6 L986.4 195.2 L987.1 193.6 L987.8 195.3 L988.5 195.1 L989.2 195.3 L989.9 196.5 L990.7 197.0 L991.4 197.0 L992.1 198.1 L992.8 198.6 L993.5 199.3 L994.2 200.0 L994.2 201.2 L993.5 201.8 L992.8 202.6 L992.1 202.9 L991.4 204.5 L990.7 204.1 L989.9 205.0 L989.2 206.4 L988.5 206.7 L987.8 206.5 L987.1 207.6 L986.4 206.7 L985.7 207.0 L985.0 207.2 L984.3 206.8 L983.6 206.4 L982.8 206.1 L982.1 206.7 L981.4 206.7 L980.7 207.1 L980.0 207.0 L979.3 209.8 L978.6 209.5 L977.9 209.7 L977.2 207.1 L976.5 208.6 L975.7 209.8 L975.0 209.5 L974.3 208.7 L973.6 209.5 L972.9 204.8 L972.2 201.2 Z"/><path d="M1005.8 200.0 L1006.5 194.9 L1007.3 193.0 L1008.0 194.2 L1008.7 194.0 L1009.4 193.1 L1010.1 193.6 L1010.9 193.0 L1011.6 192.8 L1012.3 193.3 L1013.0 194.9 L1013.7 195.5 L1014.5 194.6 L1015.2 195.6 L1015.9 195.7 L1016.6 195.2 L1017.3 195.2 L1018.1 195.8 L1018.8 195.8 L1019.5 195.3 L1020.2 196.9 L1020.9 197.2 L1021.7 198.0 L1022.4 198.2 L1023.1 199.1 L1023.8 200.0 L1023.8 201.2 L1023.1 202.0 L1022.4 203.1 L1021.7 203.4 L1020.9 204.4 L1020.2 204.3 L1019.5 205.9 L1018.8 205.7 L1018.1 205.5 L1017.3 206.0 L1016.6 205.4 L1015.9 205.0 L1015.2 205.6 L1014.5 206.5 L1013.7 206.0 L1013.0 206.3 L1012.3 206.9 L1011.6 208.3 L1010.9 208.1 L1010.1 207.4 L1009.4 208.4 L1008.7 207.4 L1008.0 207.6 L1007.3 208.7 L1006.5 205.6 L1005.8 201.2 Z"/><path d="M1039.5 200.0 L1040.2 195.9 L1040.9 193.7 L1041.6 191.7 L1042.3 193.1 L1043.0 193.6 L1043.7 193.3 L1044.4 193.6 L1045.1 191.7 L1045.8 193.3 L1046.5 193.2 L1047.2 193.5 L1047.9 191.7 L1048.6 194.1 L1049.3 194.3 L1050.0 194.7 L1050.7 195.0 L1051.5 194.7 L1052.2 194.1 L1052.9 193.9 L1053.6 195.0 L1054.3 195.2 L1055.0 194.7 L1055.7 194.3 L1056.4 195.3 L1057.1 195.8 L1057.8 195.9 L1058.5 195.4 L1059.2 196.4 L1059.9 197.6 L1060.6 197.9 L1061.3 198.2 L1062.0 198.6 L1062.7 199.4 L1063.5 200.0 L1063.5 201.2 L1062.7 201.8 L1062.0 202.4 L1061.3 203.0 L1060.6 203.4 L1059.9 203.3 L1059.2 204.6 L1058.5 205.9 L1057.8 205.5 L1057.1 205.8 L1056.4 206.2 L1055.7 206.8 L1055.0 206.3 L1054.3 206.7 L1053.6 206.7 L1052.9 207.5 L1052.2 206.4 L1051.5 206.6 L1050.7 206.7 L1050.0 206.7 L1049.3 206.2 L1048.6 206.5 L1047.9 209.9 L1047.2 207.0 L1046.5 207.1 L1045.8 207.9 L1045.1 208.7 L1044.4 207.6 L1043.7 208.6 L1043.0 208.4 L1042.3 208.6 L1041.6 208.4 L1040.9 208.1 L1040.2 205.8 L1039.5 201.2 Z"/><path d="M1073.1 200.0 L1073.8 195.7 L1074.5 193.5 L1075.2 193.0 L1075.9 193.8 L1076.6 193.2 L1077.3 192.2 L1078.0 194.0 L1078.7 192.9 L1079.4 192.5 L1080.1 195.5 L1080.8 194.9 L1081.5 195.3 L1082.2 195.2 L1082.9 194.7 L1083.6 194.4 L1084.3 195.0 L1085.0 195.5 L1085.7 194.6 L1086.4 195.7 L1087.1 196.8 L1087.8 197.0 L1088.5 197.6 L1089.2 198.6 L1089.9 199.2 L1090.6 200.0 L1090.6 201.2 L1089.9 201.8 L1089.2 202.5 L1088.5 203.8 L1087.8 204.3 L1087.1 204.1 L1086.4 206.1 L1085.7 205.8 L1085.0 205.1 L1084.3 206.0 L1083.6 206.0 L1082.9 206.1 L1082.2 206.7 L1081.5 206.1 L1080.8 206.4 L1080.1 205.1 L1079.4 208.4 L1078.7 209.1 L1078.0 206.5 L1077.3 208.4 L1076.6 207.2 L1075.9 207.6 L1075.2 208.4 L1074.5 207.2 L1073.8 205.0 L1073.1 201.2 Z"/><path d="M1106.7 200.0 L1107.4 195.5 L1108.1 191.0 L1108.9 192.0 L1109.6 192.0 L1110.3 192.9 L1111.0 193.1 L1111.7 191.2 L1112.5 191.0 L1113.2 192.5 L1113.9 192.1 L1114.6 191.8 L1115.3 191.5 L1116.0 194.7 L1116.8 195.1 L1117.5 194.7 L1118.2 193.3 L1118.9 194.5 L1119.6 194.5 L1120.4 193.4 L1121.1 193.8 L1121.8 193.3 L1122.5 193.5 L1123.2 193.5 L1124.0 194.3 L1124.7 195.6 L1125.4 195.8 L1126.1 196.1 L1126.8 197.6 L1127.5 197.5 L1128.3 198.7 L1129.0 199.4 L1129.7 200.0 L1129.7 201.2 L1129.0 201.9 L1128.3 202.3 L1127.5 203.5 L1126.8 203.3 L1126.1 204.7 L1125.4 204.9 L1124.7 205.2 L1124.0 207.0 L1123.2 207.6 L1122.5 208.1 L1121.8 207.9 L1121.1 207.7 L1120.4 208.1 L1119.6 206.3 L1118.9 207.3 L1118.2 208.4 L1117.5 206.9 L1116.8 205.7 L1116.0 207.1 L1115.3 210.9 L1114.6 208.8 L1113.9 209.8 L1113.2 208.8 L1112.5 210.8 L1111.7 210.5 L1111.0 207.8 L1110.3 207.7 L1109.6 208.5 L1108.9 209.8 L1108.1 210.9 L1107.4 205.0 L1106.7 201.2 Z"/><path d="M1140.3 200.0 L1141.0 199.1 L1141.8 198.2 L1142.5 197.1 L1143.2 196.0 L1143.9 195.0 L1144.6 193.9 L1145.4 195.2 L1146.1 195.7 L1146.8 194.6 L1147.5 194.9 L1148.2 195.9 L1149.0 196.4 L1149.7 196.5 L1150.4 196.5 L1151.1 196.9 L1151.8 196.7 L1152.6 197.4 L1153.3 197.5 L1154.0 197.7 L1154.7 198.2 L1155.4 198.3 L1156.2 198.7 L1156.9 199.2 L1157.6 199.6 L1158.3 200.0 L1158.3 201.2 L1157.6 201.7 L1156.9 202.1 L1156.2 202.5 L1155.4 202.8 L1154.7 203.0 L1154.0 203.2 L1153.3 204.0 L1152.6 204.2 L1151.8 204.3 L1151.1 204.1 L1150.4 204.2 L1149.7 204.5 L1149.0 205.1 L1148.2 204.8 L1147.5 206.5 L1146.8 206.8 L1146.1 206.0 L1145.4 205.5 L1144.6 206.6 L1143.9 206.8 L1143.2 204.7 L1142.5 204.4 L1141.8 202.9 L1141.0 202.0 L1140.3 201.2 Z"/><path d="M1174.0 200.0 L1174.7 195.7 L1175.4 190.6 L1176.1 191.9 L1176.8 191.1 L1177.5 191.9 L1178.2 191.0 L1179.0 190.7 L1179.7 192.6 L1180.4 191.9 L1181.1 191.5 L1181.8 193.6 L1182.5 193.6 L1183.2 194.4 L1184.0 194.4 L1184.7 195.0 L1185.4 195.1 L1186.1 194.6 L1186.8 194.2 L1187.5 193.4 L1188.2 194.2 L1189.0 194.3 L1189.7 195.2 L1190.4 196.3 L1191.1 196.5 L1191.8 197.4 L1192.5 198.4 L1193.2 199.1 L1194.0 200.0 L1194.0 201.2 L1193.2 202.0 L1192.5 203.0 L1191.8 203.6 L1191.1 204.9 L1190.4 204.5 L1189.7 205.8 L1189.0 207.3 L1188.2 207.0 L1187.5 207.2 L1186.8 206.8 L1186.1 207.2 L1185.4 205.7 L1184.7 206.8 L1184.0 207.5 L1183.2 206.6 L1182.5 207.8 L1181.8 208.0 L1181.1 208.6 L1180.4 208.4 L1179.7 209.0 L1179.0 209.9 L1178.2 209.6 L1177.5 208.9 L1176.8 209.3 L1176.1 209.3 L1175.4 209.2 L1174.7 205.9 L1174.0 201.2 Z"/><path d="M1207.6 200.0 L1208.3 195.7 L1209.0 193.6 L1209.7 192.4 L1210.4 193.9 L1211.1 193.6 L1211.8 193.9 L1212.5 193.9 L1213.2 192.7 L1214.0 192.1 L1214.7 195.3 L1215.4 194.6 L1216.1 195.2 L1216.8 194.9 L1217.5 195.6 L1218.2 195.8 L1218.9 194.6 L1219.6 195.1 L1220.3 195.6 L1221.0 196.1 L1221.7 196.7 L1222.5 197.7 L1223.2 198.3 L1223.9 199.2 L1224.6 200.0 L1224.6 201.2 L1223.9 202.0 L1223.2 202.9 L1222.5 203.5 L1221.7 204.9 L1221.0 205.0 L1220.3 205.1 L1219.6 206.3 L1218.9 206.9 L1218.2 205.2 L1217.5 205.5 L1216.8 205.7 L1216.1 205.6 L1215.4 207.0 L1214.7 206.6 L1214.0 208.1 L1213.2 207.7 L1212.5 208.2 L1211.8 207.0 L1211.1 207.7 L1210.4 206.8 L1209.7 208.0 L1209.0 208.0 L1208.3 205.1 L1207.6 201.2 Z"/><path d="M1241.2 200.0 L1241.9 199.4 L1242.6 198.8 L1243.3 198.3 L1244.0 197.5 L1244.7 197.1 L1245.4 197.0 L1246.1 197.6 L1246.8 197.6 L1247.5 197.8 L1248.2 197.6 L1248.9 197.9 L1249.6 198.3 L1250.3 198.2 L1251.0 198.6 L1251.7 198.7 L1252.4 199.0 L1253.1 199.2 L1253.8 199.4 L1254.5 199.7 L1255.2 200.0 L1255.2 201.2 L1254.5 201.5 L1253.8 201.8 L1253.1 202.0 L1252.4 202.1 L1251.7 202.7 L1251.0 202.5 L1250.3 202.8 L1249.6 202.9 L1248.9 203.4 L1248.2 203.4 L1247.5 203.5 L1246.8 203.7 L1246.1 203.6 L1245.4 204.3 L1244.7 204.3 L1244.0 203.4 L1243.3 202.8 L1242.6 202.5 L1241.9 201.9 L1241.2 201.2 Z"/><path d="M1274.8 200.0 L1275.5 196.3 L1276.3 193.2 L1277.0 191.2 L1277.7 190.6 L1278.4 193.1 L1279.1 192.1 L1279.8 192.1 L1280.5 191.4 L1281.3 192.5 L1282.0 191.2 L1282.7 191.8 L1283.4 191.1 L1284.1 192.6 L1284.8 191.1 L1285.5 191.5 L1286.3 194.0 L1287.0 193.3 L1287.7 193.9 L1288.4 193.6 L1289.1 194.6 L1289.8 194.9 L1290.5 194.4 L1291.3 194.6 L1292.0 194.6 L1292.7 194.8 L1293.4 193.7 L1294.1 194.7 L1294.8 194.2 L1295.5 193.9 L1296.3 194.4 L1297.0 193.9 L1297.7 194.4 L1298.4 195.0 L1299.1 195.4 L1299.8 196.9 L1300.5 196.4 L1301.3 197.5 L1302.0 198.1 L1302.7 198.2 L1303.4 199.0 L1304.1 199.3 L1304.8 200.0 L1304.8 201.2 L1304.1 201.8 L1303.4 202.3 L1302.7 202.9 L1302.0 203.0 L1301.3 203.4 L1300.5 205.0 L1299.8 203.8 L1299.1 205.9 L1298.4 205.7 L1297.7 207.5 L1297.0 206.5 L1296.3 207.5 L1295.5 207.6 L1294.8 206.9 L1294.1 206.2 L1293.4 207.0 L1292.7 205.6 L1292.0 206.4 L1291.3 206.4 L1290.5 207.3 L1289.8 206.8 L1289.1 206.7 L1288.4 207.6 L1287.7 207.9 L1287.0 207.6 L1286.3 206.7 L1285.5 209.6 L1284.8 210.9 L1284.1 207.7 L1283.4 209.8 L1282.7 208.7 L1282.0 211.1 L1281.3 208.1 L1280.5 209.5 L1279.8 208.9 L1279.1 207.9 L1278.4 207.7 L1277.7 210.2 L1277.0 209.0 L1276.3 207.8 L1275.5 204.5 L1274.8 201.2 Z"/><path d="M1308.5 200.0 L1309.2 195.5 L1309.9 191.3 L1310.6 191.5 L1311.3 191.8 L1312.0 191.7 L1312.7 191.3 L1313.4 192.9 L1314.1 193.2 L1314.8 193.4 L1315.5 193.2 L1316.3 192.3 L1317.0 193.8 L1317.7 193.9 L1318.4 194.4 L1319.1 193.9 L1319.8 194.6 L1320.5 195.2 L1321.2 194.2 L1321.9 194.3 L1322.6 193.7 L1323.4 193.6 L1324.1 194.5 L1324.8 195.7 L1325.5 195.3 L1326.2 195.6 L1326.9 196.7 L1327.6 197.0 L1328.3 198.0 L1329.0 198.5 L1329.7 199.3 L1330.5 200.0 L1330.5 201.2 L1329.7 202.0 L1329.0 202.8 L1328.3 203.2 L1327.6 203.9 L1326.9 204.5 L1326.2 205.4 L1325.5 205.7 L1324.8 205.8 L1324.1 207.4 L1323.4 207.6 L1322.6 207.2 L1321.9 207.2 L1321.2 206.1 L1320.5 206.1 L1319.8 207.3 L1319.1 207.1 L1318.4 207.1 L1317.7 207.3 L1317.0 206.5 L1316.3 209.0 L1315.5 208.0 L1314.8 207.7 L1314.1 208.0 L1313.4 207.7 L1312.7 210.0 L1312.0 209.3 L1311.3 209.5 L1310.6 209.0 L1309.9 210.6 L1309.2 205.9 L1308.5 201.2 Z"/></g></svg>
<div class="abs" style="left:434px;top:223.4px;width:870px;height:3.4px;background:#101010"></div>
<div class="abs" style="left:434px;top:226.7px;width:870px;height:65.6px;background:#50a01c"></div>
<svg class="abs" style="left:0;top:0" width="1304" height="440" viewBox="0 0 1304 440"><g fill="#d8f7c0"><rect x="433.1" y="258.5" width="17.3" height="1.3"/><rect x="466.7" y="258.5" width="17.3" height="1.3"/><rect x="500.3" y="258.5" width="17.3" height="1.3"/><rect x="534.0" y="258.5" width="17.3" height="1.3"/><rect x="567.6" y="258.5" width="17.3" height="1.3"/><rect x="601.2" y="258.5" width="17.3" height="1.3"/><rect x="634.9" y="258.5" width="17.3" height="1.3"/><rect x="668.5" y="258.5" width="17.3" height="1.3"/><rect x="702.1" y="258.5" width="17.3" height="1.3"/><rect x="735.7" y="258.5" width="17.3" height="1.3"/><rect x="769.4" y="258.5" width="17.3" height="1.3"/><rect x="803.0" y="258.5" width="17.3" height="1.3"/><rect x="836.6" y="258.5" width="17.3" height="1.3"/><rect x="870.2" y="258.5" width="17.3" height="1.3"/><rect x="903.9" y="258.5" width="17.3" height="1.3"/><rect x="937.5" y="258.5" width="17.3" height="1.3"/><rect x="971.1" y="258.5" width="17.3" height="1.3"/><rect x="1004.7" y="258.5" width="17.3" height="1.3"/><rect x="1038.4" y="258.5" width="17.3" height="1.3"/><rect x="1072.0" y="258.5" width="17.3" height="1.3"/><rect x="1105.6" y="258.5" width="17.3" height="1.3"/><rect x="1139.2" y="258.5" width="17.3" height="1.3"/><rect x="1172.9" y="258.5" width="17.3" height="1.3"/><rect x="1206.5" y="258.5" width="17.3" height="1.3"/><rect x="1240.1" y="258.5" width="17.3" height="1.3"/><rect x="1272" y="258.5" width="25.6" height="1.3"/></g></svg>
<div class="abs" style="left:434px;top:292.25px;width:870px;height:3.6px;background:#101010"></div>
<div class="abs" style="left:434px;top:295.8px;width:870px;height:65.3px;background:#563fb0"></div>
<svg class="abs" style="left:0;top:0" width="1304" height="440" viewBox="0 0 1304 440"><rect x="432.9" y="319.8" width="14.5" height="10.9" fill="#7560c4"/><rect x="449.7" y="319.8" width="14.5" height="10.9" fill="#7560c4"/><rect x="466.5" y="319.8" width="14.5" height="10.9" fill="#7560c4"/><rect x="483.3" y="319.8" width="14.5" height="10.9" fill="#7560c4"/><rect x="500.1" y="319.8" width="14.5" height="10.9" fill="#7560c4"/><rect x="517.0" y="319.8" width="14.5" height="10.9" fill="#7560c4"/><rect x="533.8" y="319.8" width="14.5" height="10.9" fill="#7560c4"/><rect x="550.6" y="319.8" width="14.5" height="10.9" fill="#7560c4"/><rect x="567.4" y="319.8" width="14.5" height="10.9" fill="#7560c4"/><rect x="584.2" y="319.8" width="14.5" height="10.9" fill="#7560c4"/><rect x="601.0" y="319.8" width="14.5" height="10.9" fill="#7560c4"/><rect x="617.8" y="319.8" width="14.5" height="10.9" fill="#7560c4"/><rect x="634.6" y="319.8" width="14.5" height="10.9" fill="#7560c4"/><rect x="651.5" y="319.8" width="14.5" height="10.9" fill="#7560c4"/><rect x="668.3" y="319.8" width="14.5" height="10.9" fill="#7560c4"/><rect x="685.1" y="319.8" width="14.5" height="10.9" fill="#7560c4"/><rect x="701.9" y="319.8" width="14.5" height="10.9" fill="#7560c4"/><rect x="718.7" y="319.8" width="14.5" height="10.9" fill="#7560c4"/><rect x="735.5" y="319.8" width="14.5" height="10.9" fill="#7560c4"/><rect x="752.3" y="319.8" width="14.5" height="10.9" fill="#7560c4"/><rect x="769.1" y="319.8" width="14.5" height="10.9" fill="#7560c4"/><rect x="786.0" y="319.8" width="14.5" height="10.9" fill="#7560c4"/><rect x="802.8" y="319.8" width="14.5" height="10.9" fill="#7560c4"/><rect x="819.6" y="319.8" width="14.5" height="10.9" fill="#7560c4"/><rect x="836.4" y="319.8" width="14.5" height="10.9" fill="#7560c4"/><rect x="853.2" y="319.8" width="14.5" height="10.9" fill="#7560c4"/><rect x="870.0" y="319.8" width="14.5" height="10.9" fill="#7560c4"/><rect x="886.8" y="319.8" width="14.5" height="10.9" fill="#7560c4"/><rect x="903.6" y="319.8" width="14.5" height="10.9" fill="#7560c4"/><rect x="920.5" y="319.8" width="14.5" height="10.9" fill="#7560c4"/><rect x="937.3" y="319.8" width="14.5" height="10.9" fill="#7560c4"/><rect x="954.1" y="319.8" width="14.5" height="10.9" fill="#7560c4"/><rect x="970.9" y="319.8" width="14.5" height="10.9" fill="#7560c4"/><rect x="987.7" y="319.8" width="14.5" height="10.9" fill="#7560c4"/><rect x="1004.5" y="319.8" width="14.5" height="10.9" fill="#7560c4"/><rect x="1021.3" y="319.8" width="14.5" height="10.9" fill="#7560c4"/><rect x="1038.2" y="319.8" width="14.5" height="10.9" fill="#7560c4"/><rect x="1055.0" y="319.8" width="14.5" height="10.9" fill="#7560c4"/><rect x="1071.8" y="319.8" width="14.5" height="10.9" fill="#7560c4"/><rect x="1088.6" y="319.8" width="14.5" height="10.9" fill="#7560c4"/><rect x="1105.4" y="319.8" width="14.5" height="10.9" fill="#7560c4"/><rect x="1122.2" y="319.8" width="14.5" height="10.9" fill="#7560c4"/><rect x="1139.0" y="319.8" width="14.5" height="10.9" fill="#7560c4"/><rect x="1155.8" y="319.8" width="14.5" height="10.9" fill="#7560c4"/><rect x="1172.7" y="319.8" width="14.5" height="10.9" fill="#7560c4"/><rect x="1189.5" y="319.8" width="14.5" height="10.9" fill="#7560c4"/><rect x="1206.3" y="319.8" width="14.5" height="10.9" fill="#7560c4"/><rect x="1223.1" y="319.8" width="14.5" height="10.9" fill="#7560c4"/><rect x="1239.9" y="319.8" width="14.5" height="10.9" fill="#7560c4"/><rect x="1256.7" y="319.8" width="14.5" height="10.9" fill="#7560c4"/><rect x="1273.5" y="319.8" width="14.5" height="10.9" fill="#7560c4"/><rect x="1290.3" y="319.8" width="14.5" height="10.9" fill="#7560c4"/><rect x="1307.2" y="319.8" width="14.5" height="10.9" fill="#7560c4"/><rect x="432.9" y="333.0" width="14.5" height="10.9" fill="#7560c4"/><rect x="449.7" y="333.0" width="14.5" height="10.9" fill="#7560c4"/><rect x="466.5" y="333.0" width="14.5" height="10.9" fill="#7560c4"/><rect x="483.3" y="333.0" width="14.5" height="10.9" fill="#7560c4"/><rect x="500.1" y="333.0" width="14.5" height="10.9" fill="#7560c4"/><rect x="517.0" y="333.0" width="14.5" height="10.9" fill="#7560c4"/><rect x="533.8" y="333.0" width="14.5" height="10.9" fill="#7560c4"/><rect x="550.6" y="333.0" width="14.5" height="10.9" fill="#7560c4"/><rect x="567.4" y="333.0" width="14.5" height="10.9" fill="#7560c4"/><rect x="584.2" y="333.0" width="14.5" height="10.9" fill="#7560c4"/><rect x="601.0" y="333.0" width="14.5" height="10.9" fill="#7560c4"/><rect x="617.8" y="333.0" width="14.5" height="10.9" fill="#7560c4"/><rect x="634.6" y="333.0" width="14.5" height="10.9" fill="#7560c4"/><rect x="651.5" y="333.0" width="14.5" height="10.9" fill="#7560c4"/><rect x="668.3" y="333.0" width="14.5" height="10.9" fill="#7560c4"/><rect x="685.1" y="333.0" width="14.5" height="10.9" fill="#7560c4"/><rect x="701.9" y="333.0" width="14.5" height="10.9" fill="#7560c4"/><rect x="718.7" y="333.0" width="14.5" height="10.9" fill="#7560c4"/><rect x="735.5" y="333.0" width="14.5" height="10.9" fill="#7560c4"/><rect x="752.3" y="333.0" width="14.5" height="10.9" fill="#7560c4"/><rect x="769.1" y="333.0" width="14.5" height="10.9" fill="#7560c4"/><rect x="786.0" y="333.0" width="14.5" height="10.9" fill="#7560c4"/><rect x="802.8" y="333.0" width="14.5" height="10.9" fill="#7560c4"/><rect x="819.6" y="333.0" width="14.5" height="10.9" fill="#7560c4"/><rect x="836.4" y="333.0" width="14.5" height="10.9" fill="#7560c4"/><rect x="853.2" y="333.0" width="14.5" height="10.9" fill="#7560c4"/><rect x="870.0" y="333.0" width="14.5" height="10.9" fill="#7560c4"/><rect x="886.8" y="333.0" width="14.5" height="10.9" fill="#7560c4"/><rect x="903.6" y="333.0" width="14.5" height="10.9" fill="#7560c4"/><rect x="920.5" y="333.0" width="14.5" height="10.9" fill="#7560c4"/><rect x="937.3" y="333.0" width="14.5" height="10.9" fill="#7560c4"/><rect x="954.1" y="333.0" width="14.5" height="10.9" fill="#7560c4"/><rect x="970.9" y="333.0" width="14.5" height="10.9" fill="#7560c4"/><rect x="987.7" y="333.0" width="14.5" height="10.9" fill="#7560c4"/><rect x="1004.5" y="333.0" width="14.5" height="10.9" fill="#7560c4"/><rect x="1021.3" y="333.0" width="14.5" height="10.9" fill="#7560c4"/><rect x="1038.2" y="333.0" width="14.5" height="10.9" fill="#7560c4"/><rect x="1055.0" y="333.0" width="14.5" height="10.9" fill="#7560c4"/><rect x="1071.8" y="333.0" width="14.5" height="10.9" fill="#7560c4"/><rect x="1088.6" y="333.0" width="14.5" height="10.9" fill="#7560c4"/><rect x="1105.4" y="333.0" width="14.5" height="10.9" fill="#7560c4"/><rect x="1122.2" y="333.0" width="14.5" height="10.9" fill="#7560c4"/><rect x="1139.0" y="333.0" width="14.5" height="10.9" fill="#7560c4"/><rect x="1155.8" y="333.0" width="14.5" height="10.9" fill="#7560c4"/><rect x="1172.7" y="333.0" width="14.5" height="10.9" fill="#7560c4"/><rect x="1189.5" y="333.0" width="14.5" height="10.9" fill="#7560c4"/><rect x="1206.3" y="333.0" width="14.5" height="10.9" fill="#7560c4"/><rect x="1223.1" y="333.0" width="14.5" height="10.9" fill="#7560c4"/><rect x="1239.9" y="333.0" width="14.5" height="10.9" fill="#7560c4"/><rect x="1256.7" y="333.0" width="14.5" height="10.9" fill="#7560c4"/><rect x="1273.5" y="333.0" width="14.5" height="10.9" fill="#7560c4"/><rect x="1290.3" y="333.0" width="14.5" height="10.9" fill="#7560c4"/><rect x="1307.2" y="333.0" width="14.5" height="10.9" fill="#7560c4"/><rect x="432.9" y="346.3" width="14.5" height="10.9" fill="#7560c4"/><rect x="449.7" y="346.3" width="14.5" height="10.9" fill="#7560c4"/><rect x="466.5" y="346.3" width="14.5" height="10.9" fill="#7560c4"/><rect x="483.3" y="346.3" width="14.5" height="10.9" fill="#7560c4"/><rect x="500.1" y="346.3" width="14.5" height="10.9" fill="#7560c4"/><rect x="517.0" y="346.3" width="14.5" height="10.9" fill="#7560c4"/><rect x="533.8" y="346.3" width="14.5" height="10.9" fill="#7560c4"/><rect x="550.6" y="346.3" width="14.5" height="10.9" fill="#7560c4"/><rect x="567.4" y="346.3" width="14.5" height="10.9" fill="#7560c4"/><rect x="584.2" y="346.3" width="14.5" height="10.9" fill="#7560c4"/><rect x="601.0" y="346.3" width="14.5" height="10.9" fill="#7560c4"/><rect x="617.8" y="346.3" width="14.5" height="10.9" fill="#7560c4"/><rect x="634.6" y="346.3" width="14.5" height="10.9" fill="#7560c4"/><rect x="651.5" y="346.3" width="14.5" height="10.9" fill="#7560c4"/><rect x="668.3" y="346.3" width="14.5" height="10.9" fill="#7560c4"/><rect x="685.1" y="346.3" width="14.5" height="10.9" fill="#7560c4"/><rect x="701.9" y="346.3" width="14.5" height="10.9" fill="#7560c4"/><rect x="718.7" y="346.3" width="14.5" height="10.9" fill="#7560c4"/><rect x="735.5" y="346.3" width="14.5" height="10.9" fill="#7560c4"/><rect x="752.3" y="346.3" width="14.5" height="10.9" fill="#7560c4"/><rect x="769.1" y="346.3" width="14.5" height="10.9" fill="#7560c4"/><rect x="786.0" y="346.3" width="14.5" height="10.9" fill="#7560c4"/><rect x="802.8" y="346.3" width="14.5" height="10.9" fill="#7560c4"/><rect x="819.6" y="346.3" width="14.5" height="10.9" fill="#7560c4"/><rect x="836.4" y="346.3" width="14.5" height="10.9" fill="#7560c4"/><rect x="853.2" y="346.3" width="14.5" height="10.9" fill="#7560c4"/><rect x="870.0" y="346.3" width="14.5" height="10.9" fill="#7560c4"/><rect x="886.8" y="346.3" width="14.5" height="10.9" fill="#7560c4"/><rect x="903.6" y="346.3" width="14.5" height="10.9" fill="#7560c4"/><rect x="920.5" y="346.3" width="14.5" height="10.9" fill="#7560c4"/><rect x="937.3" y="346.3" width="14.5" height="10.9" fill="#7560c4"/><rect x="954.1" y="346.3" width="14.5" height="10.9" fill="#7560c4"/><rect x="970.9" y="346.3" width="14.5" height="10.9" fill="#7560c4"/><rect x="987.7" y="346.3" width="14.5" height="10.9" fill="#7560c4"/><rect x="1004.5" y="346.3" width="14.5" height="10.9" fill="#7560c4"/><rect x="1021.3" y="346.3" width="14.5" height="10.9" fill="#7560c4"/><rect x="1038.2" y="346.3" width="14.5" height="10.9" fill="#7560c4"/><rect x="1055.0" y="346.3" width="14.5" height="10.9" fill="#7560c4"/><rect x="1071.8" y="346.3" width="14.5" height="10.9" fill="#7560c4"/><rect x="1088.6" y="346.3" width="14.5" height="10.9" fill="#7560c4"/><rect x="1105.4" y="346.3" width="14.5" height="10.9" fill="#7560c4"/><rect x="1122.2" y="346.3" width="14.5" height="10.9" fill="#7560c4"/><rect x="1139.0" y="346.3" width="14.5" height="10.9" fill="#7560c4"/><rect x="1155.8" y="346.3" width="14.5" height="10.9" fill="#7560c4"/><rect x="1172.7" y="346.3" width="14.5" height="10.9" fill="#7560c4"/><rect x="1189.5" y="346.3" width="14.5" height="10.9" fill="#7560c4"/><rect x="1206.3" y="346.3" width="14.5" height="10.9" fill="#7560c4"/><rect x="1223.1" y="346.3" width="14.5" height="10.9" fill="#7560c4"/><rect x="1239.9" y="346.3" width="14.5" height="10.9" fill="#7560c4"/><rect x="1256.7" y="346.3" width="14.5" height="10.9" fill="#7560c4"/><rect x="1273.5" y="346.3" width="14.5" height="10.9" fill="#7560c4"/><rect x="1290.3" y="346.3" width="14.5" height="10.9" fill="#7560c4"/><rect x="1307.2" y="346.3" width="14.5" height="10.9" fill="#7560c4"/><rect x="433.1" y="346.3" width="14" height="10.9" fill="#dfd8ff"/><rect x="534.0" y="346.3" width="14" height="10.9" fill="#dfd8ff"/><rect x="601.2" y="346.3" width="14" height="10.9" fill="#dfd8ff"/><rect x="702.1" y="346.3" width="14" height="10.9" fill="#dfd8ff"/><rect x="803.0" y="346.3" width="14" height="10.9" fill="#dfd8ff"/><rect x="870.2" y="346.3" width="14" height="10.9" fill="#dfd8ff"/><rect x="971.1" y="346.3" width="14" height="10.9" fill="#dfd8ff"/><rect x="1072.0" y="346.3" width="14" height="10.9" fill="#dfd8ff"/><rect x="1240.1" y="346.3" width="14" height="10.9" fill="#dfd8ff"/><rect x="466.7" y="333.0" width="2.5" height="10.9" fill="#ece6ff"/><rect x="500.3" y="333.0" width="2.5" height="10.9" fill="#ece6ff"/><rect x="534.0" y="333.0" width="2.5" height="10.9" fill="#ece6ff"/><rect x="567.6" y="333.0" width="2.5" height="10.9" fill="#ece6ff"/><rect x="601.2" y="333.0" width="2.5" height="10.9" fill="#ece6ff"/><rect x="634.9" y="333.0" width="2.5" height="10.9" fill="#ece6ff"/><rect x="651.7" y="333.0" width="2.5" height="10.9" fill="#ece6ff"/><rect x="668.5" y="333.0" width="2.5" height="10.9" fill="#ece6ff"/><rect x="685.3" y="333.0" width="2.5" height="10.9" fill="#ece6ff"/><rect x="735.7" y="333.0" width="2.5" height="10.9" fill="#ece6ff"/><rect x="769.4" y="333.0" width="2.5" height="10.9" fill="#ece6ff"/><rect x="803.0" y="333.0" width="2.5" height="10.9" fill="#ece6ff"/><rect x="836.6" y="333.0" width="2.5" height="10.9" fill="#ece6ff"/><rect x="870.2" y="333.0" width="2.5" height="10.9" fill="#ece6ff"/><rect x="903.9" y="333.0" width="2.5" height="10.9" fill="#ece6ff"/><rect x="920.7" y="333.0" width="2.5" height="10.9" fill="#ece6ff"/><rect x="937.5" y="333.0" width="2.5" height="10.9" fill="#ece6ff"/><rect x="954.3" y="333.0" width="2.5" height="10.9" fill="#ece6ff"/><rect x="1004.7" y="333.0" width="2.5" height="10.9" fill="#ece6ff"/><rect x="1038.4" y="333.0" width="2.5" height="10.9" fill="#ece6ff"/><rect x="1072.0" y="333.0" width="2.5" height="10.9" fill="#ece6ff"/><rect x="1105.6" y="333.0" width="2.5" height="10.9" fill="#ece6ff"/><rect x="1139.2" y="333.0" width="2.5" height="10.9" fill="#ece6ff"/><rect x="1172.9" y="333.0" width="2.5" height="10.9" fill="#ece6ff"/><rect x="1206.5" y="333.0" width="2.5" height="10.9" fill="#ece6ff"/><rect x="1273.7" y="333.0" width="2.5" height="10.9" fill="#ece6ff"/><rect x="567.6" y="319.8" width="3" height="10.9" fill="#ece6ff"/><rect x="836.6" y="319.8" width="3" height="10.9" fill="#ece6ff"/><rect x="1105.6" y="319.8" width="3" height="10.9" fill="#ece6ff"/></svg>
<div class="abs" style="left:434px;top:361.1px;width:870px;height:3.1px;background:#101010"></div>
<div class="abs" style="left:434px;top:364.2px;width:870px;height:65.4px;background:#caa515"></div>
<svg class="abs" style="left:0;top:0" width="1304" height="440" viewBox="0 0 1304 440"><g fill="#fdf0b0"><rect x="690" y="415.10" width="5.0" height="1.2"/><path d="M702 397.8 L707 405.15 L702 412.5 Z"/><rect x="704" y="401.60" width="21.3" height="1.2"/><rect x="704" y="403.90" width="21.3" height="1.2"/><rect x="704" y="406.40" width="23.0" height="1.2"/><path d="M737 402.2 L742 407.1 L737 412 Z"/><rect x="740" y="406.50" width="60.0" height="1.2"/><path d="M804 392.5 L809 399.9 L804 407.3 Z"/><rect x="806" y="396.40" width="32.0" height="1.2"/><rect x="806" y="398.90" width="32.0" height="1.2"/><rect x="806" y="401.40" width="32.0" height="1.2"/><path d="M703 411.3 L708 415.65 L703 420 Z"/><rect x="705" y="415.10" width="259.0" height="1.2"/><path d="M905.5 395.8 L910.5 401.15 L905.5 406.5 Z"/><rect x="908" y="400.80" width="57.5" height="1.2"/><path d="M973 394 L977.5 401.0 L973 408 Z"/><rect x="975" y="399.50" width="86.0" height="1.2"/><rect x="975" y="403.80" width="87.0" height="1.2"/><path d="M973 411.7 L978 415.85 L973 420 Z"/><rect x="975" y="415.20" width="259.4" height="1.2"/><path d="M1073 398.2 L1078 404.6 L1073 411 Z"/><rect x="1075" y="401.40" width="59.0" height="1.2"/><rect x="1075" y="403.80" width="59.0" height="1.2"/><rect x="1075" y="406.70" width="58.0" height="1.2"/><path d="M1208.5 395.2 L1213.5 401.5 L1208.5 407.8 Z"/><rect x="1211" y="400.70" width="29.4" height="1.2"/><path d="M1240.4 398.2 L1245.4 404.6 L1240.4 411 Z"/><rect x="1242" y="401.40" width="62.0" height="1.2"/><rect x="1242" y="403.80" width="62.0" height="1.2"/><path d="M1255 402.5 L1259 405.5 L1255 408.5 Z"/><path d="M1241 411.7 L1246 415.85 L1241 420 Z"/><rect x="1243" y="415.20" width="61.0" height="1.2"/></g></svg>
<div class="abs" style="left:434px;top:429.6px;width:870px;height:2.2px;background:#161616"></div>
<style>
.menu{position:absolute;border-radius:7px;box-shadow:0 0 0 .5px rgba(0,0,0,.14),0 5px 16px rgba(0,0,0,.24);padding:6.4px 0 6px;color:#1f1f1f;font-size:14.2px;letter-spacing:.28px}
.mi{position:relative;height:24.07px;line-height:25.4px;white-space:nowrap}
.mi.dis{color:rgba(40,40,40,.34)}
.sep{position:relative;height:13.45px}
.sep:after{content:"";position:absolute;left:12px;right:12px;top:6.3px;height:1px;background:rgba(0,0,0,.11)}
.hl{position:absolute;left:6px;right:6px;top:0;height:24px;border-radius:5px;background:rgba(0,0,0,.1)}
.hl.blue{background:#2d7ef3;top:.8px}
.mi .t{position:absolute;top:1.3px;-webkit-text-stroke:.3px}
.sc{position:absolute;top:1.3px;color:rgba(50,54,50,.42);font-family:"DejaVu Sans","Liberation Sans",sans-serif;font-size:14.2px;line-height:25.4px;letter-spacing:0;width:20px;text-align:center}
.sc.l{font-family:"Liberation Sans",sans-serif;font-size:14.2px;width:auto;text-align:left}
.sc.opt{font-size:11.2px;transform:scaleY(1.4);top:2.1px}
.sc.cmd{top:2.1px}
.sc.shf{font-size:12px;transform:scaleX(2.3)}
.sc.ctl{font-size:22px;top:6.3px;margin-left:.8px;color:rgba(50,54,50,.34)}
.sc.ret{font-size:15px}
.sc.del{font-size:12.5px;transform:scaleX(.72)}
.mi svg{position:absolute;overflow:visible}
.el{font-size:11px;letter-spacing:0}
</style>
<div class="menu" id="m0" style="left:356px;top:98.8px;width:333.5px;background:linear-gradient(to right,#d2d2d2 0%,rgba(210,210,210,.97) 8%,rgba(212,214,212,.55) 30%,rgba(215,220,215,0) 55%),radial-gradient(ellipse 62% 10.5% at 100% 17%,rgba(186,221,230,.8) 0%,rgba(188,222,228,.62) 45%,rgba(190,224,222,0) 100%),linear-gradient(to bottom,#c9e9b8 0%,#c5e7b8 6%,#c4e6c2 11%,#c6e6cc 17%,#c8e5cf 23%,#cde3cf 27.5%,#d3d9da 31.5%,#d6d0e8 34.5%,#d8d0e4 38.5%,#ddd4d2 42%,#e2dac6 45%,#e6dcbc 48.5%,#dfd7bd 52.5%,#d4d0c2 57%,#cccbc7 61.5%,#c9c9c9 67%,#c7c7c7 100%);"><div class="mi"><div class="hl"></div><svg style="left:11.7px;top:11.3px" width="9" height="2" viewBox="0 0 9 2"><rect x="0" y="0" width="8.8" height="1.7" rx=".4" fill="#262626"/></svg><span class="t" style="left:25.5px;letter-spacing:0.132px">Reassign Track</span><svg style="left:312.5px;top:7.4px" width="7.4" height="10.6" viewBox="0 0 7 10"><path d="M1 1 L5.6 5 L1 9" fill="none" stroke="#262626" stroke-width="1.75" stroke-linecap="round" stroke-linejoin="round"/></svg></div><div class="sep"></div><div class="mi"><span class="t" style="left:25.5px;letter-spacing:0.302px">New Audio Track</span><span class="sc opt" style="left:277.5px">⌥</span><span class="sc cmd" style="left:290.0px">⌘</span><span class="sc l" style="left:310.3px">A</span></div><div class="mi"><span class="t" style="left:25.5px;letter-spacing:0.318px">New Software Instrument Track</span><span class="sc opt" style="left:277.5px">⌥</span><span class="sc cmd" style="left:290.0px">⌘</span><span class="sc l" style="left:310.3px">S</span></div><div class="mi"><span class="t" style="left:25.5px;letter-spacing:0.113px">New Session Player SI Track<span class="el">…</span></span><span class="sc opt" style="left:277.5px">⌥</span><span class="sc cmd" style="left:290.0px">⌘</span><span class="sc l" style="left:310.3px">P</span></div><div class="mi"><span class="t" style="left:25.5px;letter-spacing:0.164px">New External MIDI Track</span><span class="sc opt" style="left:277.5px">⌥</span><span class="sc cmd" style="left:290.0px">⌘</span><span class="sc l" style="left:310.3px">X</span></div><div class="mi"><span class="t" style="left:25.5px;letter-spacing:0.338px">New Track with Duplicate Settings</span><span class="sc cmd" style="left:290.0px">⌘</span><span class="sc l" style="left:310.3px">D</span></div><div class="sep"></div><div class="mi"><span class="t" style="left:25.5px;letter-spacing:0.039px">Rename Track</span><span class="sc shf" style="left:290.0px">⇧</span><span class="sc ret" style="left:304.5px">↩</span></div><div class="mi"><span class="t" style="left:25.5px;letter-spacing:0.260px">Delete Track</span><span class="sc cmd" style="left:290.0px">⌘</span><span class="sc del" style="left:304.5px">⌦</span></div><div class="mi"><span class="t" style="left:25.5px;letter-spacing:0.272px">Delete unused Tracks</span><span class="sc shf" style="left:277.5px">⇧</span><span class="sc cmd" style="left:290.0px">⌘</span><span class="sc del" style="left:304.5px">⌦</span></div><div class="sep"></div><div class="mi"><span class="t" style="left:25.5px;letter-spacing:0.248px">Create Track Stack<span class="el">…</span></span><span class="sc shf" style="left:277.5px">⇧</span><span class="sc cmd" style="left:290.0px">⌘</span><span class="sc l" style="left:310.3px">D</span></div><div class="mi dis"><span class="t" style="left:25.5px;letter-spacing:0.299px">Flatten Stack</span><span class="sc shf" style="left:277.5px">⇧</span><span class="sc cmd" style="left:290.0px">⌘</span><span class="sc l" style="left:310.3px">U</span></div><div class="sep"></div><div class="mi"><span class="t" style="left:25.5px;letter-spacing:0.324px">Hide Selected Track</span><span class="sc ctl" style="left:290.0px">⌃</span><span class="sc l" style="left:310.3px">H</span></div><div class="mi"><span class="t" style="left:25.5px;letter-spacing:0.332px">Hide Unselected Tracks</span></div><div class="mi dis"><span class="t" style="left:25.5px;letter-spacing:0.299px">Unhide All Tracks</span><span class="sc ctl" style="left:277.5px">⌃</span><span class="sc shf" style="left:290.0px">⇧</span><span class="sc l" style="left:310.3px">H</span></div><div class="mi"><span class="t" style="left:25.5px;letter-spacing:0.335px">Toggle Hide View</span><span class="sc l" style="left:310.3px">H</span></div><div class="sep"></div><div class="mi"><span class="t" style="left:25.5px;letter-spacing:0.202px">Assign Track Color<span class="el">…</span></span></div><div class="mi"><span class="t" style="left:25.5px;letter-spacing:0.261px">Assign Track Icon<span class="el">…</span></span></div><div class="sep"></div><div class="mi"><span class="t" style="left:25.5px;letter-spacing:0.268px">Track Header Components</span><svg style="left:312.5px;top:7.4px" width="7.4" height="10.6" viewBox="0 0 7 10"><path d="M1 1 L5.6 5 L1 9" fill="none" stroke="#262626" stroke-width="1.75" stroke-linecap="round" stroke-linejoin="round"/></svg></div><div class="mi"><span class="t" style="left:25.5px;letter-spacing:0.258px">Configure Track Header<span class="el">…</span></span><span class="sc opt" style="left:290.0px">⌥</span><span class="sc l" style="left:310.3px">T</span></div><div class="mi"><span class="t" style="left:25.5px;letter-spacing:0.232px">Store as User Defaults</span></div><div class="mi"><span class="t" style="left:25.5px;letter-spacing:0.324px">Apply User Defaults</span></div><div class="mi"><span class="t" style="left:25.5px;letter-spacing:0.296px">Revert to Defaults</span></div></div>
<div class="menu" id="m1" style="left:683.7px;top:98.5px;width:160.5px;background:linear-gradient(to bottom,#c8e8b8 0%,#c4e5b6 25%,#bcdccc 48%,#bbdcd2 62%,#c0e2b6 88%,#c2e4b2 100%);padding:7px 0 5px"><div class="mi"><span class="t" style="left:25.8px;letter-spacing:0.258px">Click &amp; Ports</span><svg style="left:139.5px;top:7.4px" width="7.4" height="10.6" viewBox="0 0 7 10"><path d="M1 1 L5.6 5 L1 9" fill="none" stroke="#262626" stroke-width="1.75" stroke-linecap="round" stroke-linejoin="round"/></svg></div><div class="mi"><span class="t" style="left:25.8px;letter-spacing:0.166px">MIDI Instr.</span><svg style="left:139.5px;top:7.4px" width="7.4" height="10.6" viewBox="0 0 7 10"><path d="M1 1 L5.6 5 L1 9" fill="none" stroke="#262626" stroke-width="1.75" stroke-linecap="round" stroke-linejoin="round"/></svg></div><div class="mi"><div class="hl"></div><svg style="left:12.0px;top:11.3px" width="9" height="2" viewBox="0 0 9 2"><rect x="0" y="0" width="8.8" height="1.7" rx=".4" fill="#262626"/></svg><span class="t" style="left:25.8px;letter-spacing:0.178px">Mixer</span><svg style="left:139.5px;top:7.4px" width="7.4" height="10.6" viewBox="0 0 7 10"><path d="M1 1 L5.6 5 L1 9" fill="none" stroke="#262626" stroke-width="1.75" stroke-linecap="round" stroke-linejoin="round"/></svg></div><div class="sep"></div><div class="mi"><span class="t" style="left:25.8px;letter-spacing:0.118px">MIDI Click</span></div><div class="mi"><span class="t" style="left:25.8px;letter-spacing:0.416px">No Output</span></div><div class="mi"><span class="t" style="left:25.8px;letter-spacing:0.275px">(Folder)</span></div></div>
<div class="menu" id="m2" style="left:837.6px;top:147.55px;width:209.2px;background:linear-gradient(to right,rgba(196,226,204,.55) 0%,rgba(196,226,204,0) 22%),linear-gradient(to bottom,#bfdaea 0%,#bdd9ea 50%,#bedce0 72%,#c2e0d2 88%,#c4e2cc 100%);padding:5.7px 0 6.1px"><div class="mi"><span class="t" style="left:26px;letter-spacing:0.326px">Audio</span><svg style="left:187.6px;top:7.4px" width="7.4" height="10.6" viewBox="0 0 7 10"><path d="M1 1 L5.6 5 L1 9" fill="none" stroke="#262626" stroke-width="1.75" stroke-linecap="round" stroke-linejoin="round"/></svg></div><div class="mi"><span class="t" style="left:26px;letter-spacing:0.404px">Others</span><svg style="left:187.6px;top:7.4px" width="7.4" height="10.6" viewBox="0 0 7 10"><path d="M1 1 L5.6 5 L1 9" fill="none" stroke="#262626" stroke-width="1.75" stroke-linecap="round" stroke-linejoin="round"/></svg></div><div class="mi"><span class="t" style="left:26px;letter-spacing:0.388px">Output Stereo</span><svg style="left:187.6px;top:7.4px" width="7.4" height="10.6" viewBox="0 0 7 10"><path d="M1 1 L5.6 5 L1 9" fill="none" stroke="#262626" stroke-width="1.75" stroke-linecap="round" stroke-linejoin="round"/></svg></div><div class="mi"><div class="hl blue"></div><svg style="left:12.2px;top:11.3px" width="9" height="2" viewBox="0 0 9 2"><rect x="0" y="0" width="8.8" height="1.7" rx=".4" fill="#fff"/></svg><span class="t" style="left:26px;color:#fff;letter-spacing:0.363px">Software Instrument</span><svg style="left:187.6px;top:7.4px" width="7.4" height="10.6" viewBox="0 0 7 10"><path d="M1 1 L5.6 5 L1 9" fill="none" stroke="#fff" stroke-width="1.75" stroke-linecap="round" stroke-linejoin="round"/></svg></div></div>
<div class="menu" id="m3" style="left:1040.8px;top:220.2px;width:225.6px;background:linear-gradient(to bottom,#c0e2b2 0%,#c2e4b2 50%,#c0e0b4 100%);padding:5.4px 0 5.9px;letter-spacing:.16px"><div class="mi"><span class="t" style="left:27px;letter-spacing:0.401px">8-Bit Drums (Inst 2)</span></div><div class="mi"><svg style="left:12px;top:7.5px" width="11" height="10" viewBox="0 0 11 10"><path d="M1 5.6 L3.9 8.8 L9.8 1" fill="none" stroke="#262626" stroke-width="1.5" stroke-linecap="round" stroke-linejoin="round"/></svg><span class="t" style="left:27px;letter-spacing:0.153px">Concert Grand Piano (Inst 1)</span></div><div class="mi"><span class="t" style="left:27px;letter-spacing:0.212px">Slap &amp; Pop (Inst 3)</span></div></div>
<svg class="abs" style="left:1240px;top:265px" width="20" height="26" viewBox="0 0 20 26"><path d="M2.5 2.8 V21 L6.7 17.1 L9.7 23.8 L12.7 22.5 L9.8 15.9 L15.4 15.7 Z" fill="#050505" stroke="#fff" stroke-width="1.5" stroke-linejoin="round"/></svg>
</div>
</body></html>
